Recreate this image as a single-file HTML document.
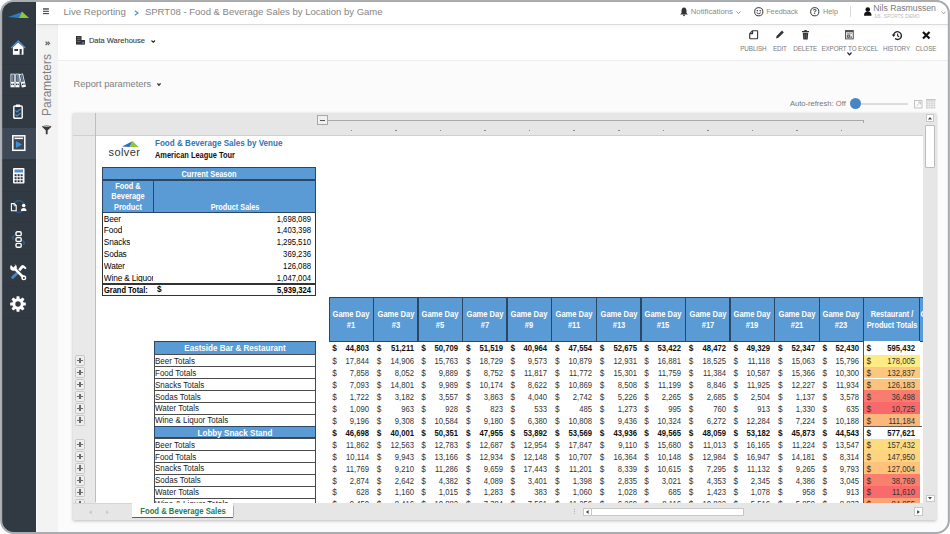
<!DOCTYPE html>
<html><head><meta charset="utf-8">
<style>
*{margin:0;padding:0;box-sizing:border-box}
html,body{width:950px;height:534px;overflow:hidden;background:#fff;font-family:"Liberation Sans", sans-serif}
.a{position:absolute}
.t{position:absolute;white-space:nowrap;line-height:1}
svg{position:absolute;overflow:visible}
</style></head><body>
<div class="a" style="left:0.00px;top:0.00px;width:35.50px;height:534.00px;background:#313942"></div>
<div class="a" style="left:0.00px;top:128.40px;width:35.50px;height:30.60px;background:#3e4957"></div>
<div class="a" style="left:2.00px;top:63.80px;width:33.50px;height:0.80px;background:#2e363f"></div>
<div class="a" style="left:2.00px;top:94.70px;width:33.50px;height:0.80px;background:#2e363f"></div>
<div class="a" style="left:2.00px;top:159.50px;width:33.50px;height:0.80px;background:#2e363f"></div>
<div class="a" style="left:2.00px;top:191.00px;width:33.50px;height:0.80px;background:#2e363f"></div>
<div class="a" style="left:2.00px;top:222.00px;width:33.50px;height:0.80px;background:#2e363f"></div>
<div class="a" style="left:2.00px;top:254.00px;width:33.50px;height:0.80px;background:#2e363f"></div>
<div class="a" style="left:2.00px;top:286.00px;width:33.50px;height:0.80px;background:#2e363f"></div>
<div class="a" style="left:2.00px;top:318.00px;width:33.50px;height:0.80px;background:#2e363f"></div>
<svg style="left:8px;top:8px" width="22" height="12" viewBox="0 0 22 12"><polygon points="0,9 14,4 11,10" fill="#2d7bc4"/><polygon points="11,10 14,3.5 21,10" fill="#8cc63f"/></svg>
<svg style="left:10px;top:40px" width="16" height="15" viewBox="0 0 16 15"><path d="M1.2 7.9 L8.2 0.9 L15.2 7.9" stroke="#4f8fd0" stroke-width="1.4" fill="none"/><path d="M2.9 7.2 L8.2 2.6 L13.5 7.2 V14.7 H2.9 Z" fill="#fff"/><rect x="4.4" y="9" width="3.6" height="2" fill="#313942"/><rect x="9.6" y="9" width="2.1" height="5.7" fill="#313942"/></svg>
<svg style="left:10px;top:72.5px" width="17" height="15" viewBox="0 0 17 15"><rect x="0.5" y="0.7" width="4.2" height="13.6" fill="#fff"/><rect x="1.3" y="1.5" width="2.6" height="7.4" fill="#3a4d63"/><rect x="2.1" y="1.5" width="0.9" height="7.4" fill="#6f8fb3"/><rect x="1.2" y="10.6" width="1.2" height="1.5" fill="#313942"/><rect x="2.8" y="10.6" width="1.2" height="1.5" fill="#313942"/><rect x="5.3" y="0.7" width="4.2" height="13.6" fill="#fff"/><rect x="6.1" y="1.5" width="2.6" height="7.4" fill="#3a4d63"/><rect x="6.9" y="1.5" width="0.9" height="7.4" fill="#6f8fb3"/><rect x="6.0" y="10.6" width="1.2" height="1.5" fill="#313942"/><rect x="7.6" y="10.6" width="1.2" height="1.5" fill="#313942"/><g transform="rotate(-13 12.5 8)"><rect x="10.4" y="0.7" width="4.2" height="13.6" fill="#fff"/><rect x="11.200000000000001" y="1.5" width="2.6" height="7.4" fill="#3a4d63"/><rect x="12.0" y="1.5" width="0.9" height="7.4" fill="#6f8fb3"/><rect x="11.1" y="10.6" width="1.2" height="1.5" fill="#313942"/><rect x="12.7" y="10.6" width="1.2" height="1.5" fill="#313942"/></g></svg>
<svg style="left:12.5px;top:103.5px" width="10" height="15" viewBox="0 0 10 15"><rect x="0.8" y="2" width="8.4" height="12.2" rx="1" fill="none" stroke="#fff" stroke-width="1.4"/><rect x="3" y="0.5" width="4" height="2.5" fill="#fff"/><path d="M2.5 6.5 L4 8 L7.5 5 M2.5 10.5 L4 12 L7.5 9" stroke="#3d8fd6" stroke-width="1.2" fill="none"/></svg>
<svg style="left:11.5px;top:135px" width="14" height="16" viewBox="0 0 14 16"><rect x="0.8" y="0.8" width="12" height="14.5" fill="none" stroke="#fff" stroke-width="1.5"/><rect x="2.5" y="2.6" width="8.6" height="1.5" fill="#fff"/><polygon points="4,6 4,13 10,9.5" fill="#3d8fd6"/></svg>
<svg style="left:12.5px;top:167.5px" width="11.5" height="15.5" viewBox="0 0 11.5 15.5"><rect x="0" y="0" width="11.5" height="15.5" rx="1" fill="#fff"/><rect x="1.5" y="1.5" width="8.5" height="3" fill="#5b8ec4"/><rect x="1.6" y="6.2" width="2" height="2" fill="#2e3641"/><rect x="4.6" y="6.2" width="2" height="2" fill="#2e3641"/><rect x="7.6" y="6.2" width="2" height="2" fill="#2e3641"/><rect x="1.6" y="9.2" width="2" height="2" fill="#2e3641"/><rect x="4.6" y="9.2" width="2" height="2" fill="#2e3641"/><rect x="7.6" y="9.2" width="2" height="2" fill="#2e3641"/><rect x="1.6" y="12.2" width="2" height="2" fill="#2e3641"/><rect x="4.6" y="12.2" width="2" height="2" fill="#2e3641"/><rect x="7.6" y="12.2" width="2" height="2" fill="#2e3641"/></svg>
<svg style="left:9.5px;top:199.5px" width="17" height="13" viewBox="0 0 17 13"><circle cx="9" cy="6.5" r="5.9" fill="none" stroke="#2f5f94" stroke-width="1.1"/><path d="M1.4 3.6 H4.3 L6.2 5.5 V10.7 H1.4 Z" fill="#313942" stroke="#fff" stroke-width="1.1"/><path d="M4 3.6 V5.8 H6.2" fill="none" stroke="#fff" stroke-width="0.7"/><rect x="7.2" y="4" width="2" height="6" fill="#313942"/><circle cx="13.7" cy="5.6" r="1.75" fill="#fff"/><path d="M10.9 11 Q10.9 7.9 13.7 7.9 Q16.5 7.9 16.5 11 Z" fill="#fff"/></svg>
<svg style="left:10.5px;top:231px" width="15" height="17" viewBox="0 0 15 17"><rect x="5" y="0.8" width="5.2" height="3.8" rx="1.2" fill="none" stroke="#fff" stroke-width="1.4"/><rect x="5" y="6.6" width="5.2" height="3.8" rx="1.2" fill="none" stroke="#fff" stroke-width="1.4"/><rect x="5" y="12.4" width="5.2" height="3.8" rx="1.2" fill="none" stroke="#fff" stroke-width="1.4"/><path d="M3.6 4.2 Q0.6 5.6 2.2 8.6" stroke="#3a78bd" stroke-width="1" fill="none"/><path d="M11.6 9.4 Q14.4 10.8 12.8 13.6" stroke="#3a78bd" stroke-width="1" fill="none"/></svg>
<svg style="left:9.5px;top:263.5px" width="17" height="16" viewBox="0 0 17 16"><path d="M2.6 13.6 L6.8 9.4" stroke="#4a86c6" stroke-width="2.8" stroke-linecap="round"/><path d="M8.2 5.2 L11.4 1.6 Q12.6 0.6 14 1.4 L16.6 4 L15.3 5.3 L13.2 3.8 L10.2 7.2 Z" fill="#fff"/><path d="M4.4 4.4 L13.4 13.4" stroke="#fff" stroke-width="2.7" stroke-linecap="round"/><circle cx="3.5" cy="3.5" r="3.3" fill="#fff"/><path d="M-0.5 -0.5 L3.4 3.4 L5.6 1.2 L2 -2.2 Z" fill="#313942"/><circle cx="13.8" cy="13.8" r="2.5" fill="#fff"/><circle cx="13.9" cy="13.9" r="1" fill="#313942"/></svg>
<svg style="left:10px;top:295.5px" width="16" height="16" viewBox="0 0 16 16"><circle cx="8" cy="8" r="5.7" fill="#fff"/><rect x="6.5" y="0.2" width="3" height="15.6" rx="0.6" fill="#fff" transform="rotate(0 8 8)"/><rect x="6.5" y="0.2" width="3" height="15.6" rx="0.6" fill="#fff" transform="rotate(45 8 8)"/><rect x="6.5" y="0.2" width="3" height="15.6" rx="0.6" fill="#fff" transform="rotate(90 8 8)"/><rect x="6.5" y="0.2" width="3" height="15.6" rx="0.6" fill="#fff" transform="rotate(135 8 8)"/><circle cx="8" cy="8" r="2.7" fill="#313942"/></svg>
<div class="a" style="left:35.50px;top:0.00px;width:914.50px;height:23.60px;background:#fff;box-shadow:0 0.6px 1px rgba(0,0,0,0.11),0 2px 5px rgba(0,0,0,0.05);z-index:2"></div>
<div class="a" style="z-index:3;left:0;top:0">
<svg style="left:43.1px;top:8px" width="6" height="7" viewBox="0 0 6 7"><rect x="0" y="0.2" width="5.9" height="1.5" fill="#555"/><rect x="0" y="2.75" width="5.9" height="1.1" fill="#444"/><rect x="0" y="5.05" width="5.9" height="1.1" fill="#444"/></svg>
<div class="t" style="left:63.40px;top:7.42px;font-size:9.7px;color:#858585;font-weight:normal;">Live Reporting</div>
<svg style="left:133.5px;top:9.5px" width="5" height="6" viewBox="0 0 5 6"><path d="M0.8 0.8 L4 3 L0.8 5.2" stroke="#4a90d0" stroke-width="1.1" fill="none"/></svg>
<div class="t" style="left:144.90px;top:6.67px;font-size:9.54px;color:#858585;font-weight:normal;">SPRT08 - Food &amp; Beverage Sales by Location by Game</div>
<svg style="left:679.5px;top:6.5px" width="8" height="9" viewBox="0 0 8 9"><path d="M4 0.5 Q6.5 0.8 6.5 4 L6.5 6 L7.8 7.5 L0.2 7.5 L1.5 6 L1.5 4 Q1.5 0.8 4 0.5Z" fill="#333"/><circle cx="4" cy="8.3" r="0.9" fill="#333"/></svg>
<div class="t" style="left:690.80px;top:7.80px;font-size:7.73px;color:#8a8a8a;font-weight:normal;">Notifications</div>
<svg style="left:736px;top:10.5px" width="5" height="3" viewBox="0 0 5 3"><path d="M0.5 0.5 L2.5 2.5 L4.5 0.5" stroke="#888" stroke-width="0.9" fill="none"/></svg>
<svg style="left:753.7px;top:6.5px" width="9.5" height="9.5" viewBox="0 0 9.5 9.5"><circle cx="4.75" cy="4.75" r="4.1" fill="none" stroke="#333" stroke-width="1"/><circle cx="3.3" cy="3.7" r="0.8" fill="#333"/><circle cx="6.2" cy="3.7" r="0.8" fill="#333"/><path d="M2.6 5.7 Q4.75 8 6.9 5.7" stroke="#333" stroke-width="0.9" fill="none"/></svg>
<div class="t" style="left:766.20px;top:8.25px;font-size:7.24px;color:#8a8a8a;font-weight:normal;">Feedback</div>
<svg style="left:810.2px;top:6.5px" width="9.5" height="9.5" viewBox="0 0 9.5 9.5"><circle cx="4.75" cy="4.75" r="4.1" fill="none" stroke="#333" stroke-width="1"/><text x="4.75" y="7.4" font-size="7" font-weight="bold" text-anchor="middle" fill="#333" font-family="Liberation Sans">?</text></svg>
<div class="t" style="left:823.00px;top:8.20px;font-size:7.29px;color:#8a8a8a;font-weight:normal;">Help</div>
<div class="a" style="left:850.00px;top:6.40px;width:1.00px;height:11.00px;background:#d8d8d8"></div>
<svg style="left:864.3px;top:7px" width="7.5" height="9" viewBox="0 0 7.5 9"><circle cx="3.75" cy="2.5" r="2.3" fill="#111"/><path d="M0 8.7 Q0 4.6 3.75 4.6 Q7.5 4.6 7.5 8.7 Z" fill="#111"/></svg>
<div class="t" style="left:873.30px;top:4.34px;font-size:8.68px;color:#7a7a7a;font-weight:normal;">Nils Rasmussen</div>
<div class="t" style="left:874.00px;top:13.96px;font-size:5.9px;color:#bbbbbb;font-weight:normal;letter-spacing:-0.05px">16. S<span style="font-size:4.7px">PORTS</span> D<span style="font-size:4.7px">EMO</span></div>
<svg style="left:940.5px;top:11px" width="5" height="3.5" viewBox="0 0 5 3.5"><path d="M0.5 0.5 L2.5 2.8 L4.5 0.5" stroke="#999" stroke-width="0.9" fill="none"/></svg>
</div>
<div class="a" style="left:35.50px;top:24.00px;width:22.70px;height:510.00px;background:#f3f3f3"></div>
<div class="a" style="left:35.50px;top:24.00px;width:1.00px;height:510.00px;background:#fbfbfb"></div>
<svg style="left:45px;top:41.2px" width="5" height="4.6" viewBox="0 0 5 4.6"><path d="M0.6 0.6 L2.3 2.3 L0.6 4 M2.8 0.6 L4.5 2.3 L2.8 4" stroke="#666" stroke-width="1.2" fill="none"/></svg>
<div class="t" style="left:6.80px;top:78.60px;width:80px;height:12px;text-align:center;font-size:11.96px;color:#808080;transform:rotate(-90deg);transform-origin:40px 6px;line-height:12px">Parameters</div>
<svg style="left:41.8px;top:124.8px" width="9.4" height="9.4" viewBox="0 0 9.4 9.4"><path d="M0 1.2 Q4.7 -0.4 9.4 1.2 Q9.4 2 8.6 2.6 L5.6 5.4 V9.3 H3.8 V5.4 L0.8 2.6 Q0 2 0 1.2 Z" fill="#3a3a3a"/><ellipse cx="4.7" cy="1.3" rx="3.6" ry="0.6" fill="#aaa"/></svg>
<div class="a" style="left:58.20px;top:60.50px;width:891.80px;height:473.50px;background:#fbfbfb"></div>
<div class="a" style="left:58.20px;top:59.50px;width:891.80px;height:1.00px;background:#ededed"></div>
<svg style="left:75.8px;top:36.1px" width="9" height="8.6" viewBox="0 0 9 8.6"><rect x="0" y="0" width="5.5" height="8.6" fill="#333"/><rect x="1" y="1.3" width="3.5" height="0.8" fill="#777"/><rect x="1" y="3.3" width="3.5" height="0.8" fill="#777"/><rect x="1" y="5.3" width="3.5" height="0.8" fill="#777"/><rect x="5" y="4" width="4" height="4.6" fill="#333"/><rect x="5.8" y="5.8" width="2.5" height="2" fill="#4a6f99"/></svg>
<div class="t" style="left:88.90px;top:37.11px;font-size:7.5px;color:#3a3a3a;font-weight:normal;-webkit-text-stroke:0.1px #3a3a3a">Data Warehouse</div>
<svg style="left:150.8px;top:39.5px" width="4.5" height="3" viewBox="0 0 4.5 3"><path d="M0.5 0.5 L2.25 2.3 L4 0.5" stroke="#222" stroke-width="1.1" fill="none"/></svg>
<div class="t" style="left:703.40px;width:100px;text-align:center;top:45.90px;font-size:6.3px;color:#7a7a7a;font-weight:normal;letter-spacing:-0.1px">PUBLISH</div>
<div class="t" style="left:729.90px;width:100px;text-align:center;top:45.90px;font-size:6.3px;color:#7a7a7a;font-weight:normal;letter-spacing:-0.1px">EDIT</div>
<div class="t" style="left:755.15px;width:100px;text-align:center;top:45.90px;font-size:6.3px;color:#7a7a7a;font-weight:normal;letter-spacing:-0.1px">DELETE</div>
<div class="t" style="left:799.85px;width:100px;text-align:center;top:45.90px;font-size:6.3px;color:#7a7a7a;font-weight:normal;letter-spacing:-0.1px">EXPORT TO EXCEL</div>
<div class="t" style="left:846.50px;width:100px;text-align:center;top:45.90px;font-size:6.3px;color:#7a7a7a;font-weight:normal;letter-spacing:-0.1px">HISTORY</div>
<div class="t" style="left:875.95px;width:100px;text-align:center;top:45.90px;font-size:6.3px;color:#7a7a7a;font-weight:normal;letter-spacing:-0.1px">CLOSE</div>
<svg style="left:748.5px;top:30px" width="9.3" height="9.5" viewBox="0 0 9.3 9.5"><path d="M3.6 0.7 H8.1 Q8.6 0.7 8.6 1.2 V8.3 Q8.6 8.8 8.1 8.8 H1.2 Q0.7 8.8 0.7 8.3 V3.6 Z M3.6 0.7 V3.6 H0.7" fill="none" stroke="#333" stroke-width="1.1" stroke-linejoin="round"/></svg>
<svg style="left:775px;top:30px" width="9.4" height="9.4" viewBox="0 0 9.4 9.4"><path d="M1 8.4 L1.6 6 L7 0.6 L8.8 2.4 L3.4 7.8 Z" fill="#333"/></svg>
<svg style="left:801.8px;top:30px" width="7" height="9.5" viewBox="0 0 7 9.5"><rect x="0" y="1" width="7" height="1.2" fill="#333"/><rect x="2.3" y="0" width="2.4" height="1.2" fill="#333"/><path d="M0.8 2.8 H6.2 L5.7 9.5 H1.3 Z" fill="#333"/><path d="M2.6 3.8 V8.5 M4.4 3.8 V8.5" stroke="#888" stroke-width="0.5"/></svg>
<svg style="left:845.4px;top:30px" width="8.8" height="9.4" viewBox="0 0 8.8 9.4"><rect x="0.5" y="0.5" width="7.8" height="8.4" fill="#f4f4f4" stroke="#555" stroke-width="1"/><rect x="0.5" y="0.5" width="7.8" height="1.8" fill="#555"/><rect x="1.8" y="3.4" width="5.2" height="0.7" fill="#777"/><rect x="1.8" y="4.6" width="3.4" height="3.2" fill="#444"/><path d="M2.4 5.1 L4.6 7.3 M4.6 5.1 L2.4 7.3" stroke="#eee" stroke-width="0.6"/><rect x="5.6" y="6.4" width="1.4" height="1.4" fill="#666"/></svg>
<svg style="left:847px;top:52.3px" width="5" height="4" viewBox="0 0 5 4"><path d="M0.5 0.5 L2.5 2.8 L4.5 0.5" stroke="#222" stroke-width="1.2" fill="none"/></svg>
<svg style="left:891.6px;top:30.6px" width="10" height="9" viewBox="0 0 10 9"><path d="M1.6 4.6 A3.9 3.9 0 1 1 3 7.6" stroke="#222" stroke-width="1.35" fill="none"/><path d="M-0.2 3.6 L3.4 3.6 L1.6 6 Z" fill="#222"/><path d="M5.6 2.4 V4.8 L7.2 5.8" stroke="#222" stroke-width="1.05" fill="none"/></svg>
<svg style="left:921.8px;top:30.5px" width="8.5" height="8.5" viewBox="0 0 8.5 8.5"><path d="M1 1 L7.5 7.5 M7.5 1 L1 7.5" stroke="#111" stroke-width="2.2"/></svg>
<div class="t" style="left:73.60px;top:79.87px;font-size:9.32px;color:#808080;font-weight:normal;">Report parameters</div>
<svg style="left:156.8px;top:82.6px" width="4" height="2.8" viewBox="0 0 4 2.8"><path d="M0.4 0.4 L2 2.2 L3.6 0.4" stroke="#333" stroke-width="1.3" fill="none"/></svg>
<div class="t" style="left:789.90px;top:99.94px;font-size:7.58px;color:#777;font-weight:normal;">Auto-refresh: Off</div>
<div class="a" style="left:855.00px;top:102.60px;width:53.30px;height:2.00px;background:#dcdcdc;border-radius:1px"></div>
<div class="a" style="left:849.50px;top:97.90px;width:11.50px;height:11.50px;background:#4586c6;border-radius:50%"></div>
<svg style="left:913.6px;top:99.5px" width="8.5" height="8.5" viewBox="0 0 8.5 8.5"><rect x="0.5" y="0.5" width="7.5" height="7.5" fill="none" stroke="#bdbdbd" stroke-width="0.9"/><path d="M2.5 6 L6.5 2 M4 2 H6.5 V4.5" stroke="#bdbdbd" stroke-width="0.8" fill="none"/></svg>
<svg style="left:926.3px;top:98.8px" width="9.6" height="9.8" viewBox="0 0 9.6 9.8"><rect x="0" y="0" width="9.6" height="1.6" fill="#c4c4c4"/><rect x="0.0" y="2.2" width="1.9" height="1.45" fill="#cdcdcd"/><rect x="2.45" y="2.2" width="1.9" height="1.45" fill="#cdcdcd"/><rect x="4.9" y="2.2" width="1.9" height="1.45" fill="#cdcdcd"/><rect x="7.3500000000000005" y="2.2" width="1.9" height="1.45" fill="#cdcdcd"/><rect x="0.0" y="4.15" width="1.9" height="1.45" fill="#cdcdcd"/><rect x="2.45" y="4.15" width="1.9" height="1.45" fill="#cdcdcd"/><rect x="4.9" y="4.15" width="1.9" height="1.45" fill="#cdcdcd"/><rect x="7.3500000000000005" y="4.15" width="1.9" height="1.45" fill="#cdcdcd"/><rect x="0.0" y="6.1" width="1.9" height="1.45" fill="#cdcdcd"/><rect x="2.45" y="6.1" width="1.9" height="1.45" fill="#cdcdcd"/><rect x="4.9" y="6.1" width="1.9" height="1.45" fill="#cdcdcd"/><rect x="7.3500000000000005" y="6.1" width="1.9" height="1.45" fill="#cdcdcd"/><rect x="0.0" y="8.05" width="1.9" height="1.45" fill="#cdcdcd"/><rect x="2.45" y="8.05" width="1.9" height="1.45" fill="#cdcdcd"/><rect x="4.9" y="8.05" width="1.9" height="1.45" fill="#cdcdcd"/><rect x="7.3500000000000005" y="8.05" width="1.9" height="1.45" fill="#cdcdcd"/></svg>
<div class="a" style="left:73.30px;top:113.00px;width:863.00px;height:407.20px;background:#e9e9e9;box-shadow:0 1px 3px rgba(0,0,0,0.25)"></div>
<div class="a" style="left:73.30px;top:113.00px;width:849.70px;height:22.00px;background:#e6e6e6"></div>
<div class="a" style="left:73.30px;top:134.70px;width:849.70px;height:1.00px;background:#cfcfcf"></div>
<div class="a" style="left:95.00px;top:113.00px;width:1.00px;height:389.00px;background:#bdbdbd"></div>
<div class="a" style="left:96.00px;top:135.70px;width:827.00px;height:367.20px;background:#fff"></div>
<div class="a" style="left:317.30px;top:114.90px;width:10.50px;height:10.50px;border:1px solid #a8a8a8;background:#f0f0f0"></div>
<div class="a" style="left:319.80px;top:119.60px;width:5.20px;height:1.30px;background:#555"></div>
<div class="a" style="left:327.80px;top:119.70px;width:535.70px;height:1.10px;background:#a9a9a9"></div>
<div class="a" style="left:862.50px;top:119.70px;width:1.10px;height:3.80px;background:#a9a9a9"></div>
<div class="a" style="left:350.59px;top:130.40px;width:1.50px;height:1.10px;background:#8a8a8a"></div>
<div class="a" style="left:395.17px;top:130.40px;width:1.50px;height:1.10px;background:#8a8a8a"></div>
<div class="a" style="left:439.75px;top:130.40px;width:1.50px;height:1.10px;background:#8a8a8a"></div>
<div class="a" style="left:484.33px;top:130.40px;width:1.50px;height:1.10px;background:#8a8a8a"></div>
<div class="a" style="left:528.91px;top:130.40px;width:1.50px;height:1.10px;background:#8a8a8a"></div>
<div class="a" style="left:573.49px;top:130.40px;width:1.50px;height:1.10px;background:#8a8a8a"></div>
<div class="a" style="left:618.07px;top:130.40px;width:1.50px;height:1.10px;background:#8a8a8a"></div>
<div class="a" style="left:662.65px;top:130.40px;width:1.50px;height:1.10px;background:#8a8a8a"></div>
<div class="a" style="left:707.23px;top:130.40px;width:1.50px;height:1.10px;background:#8a8a8a"></div>
<div class="a" style="left:751.81px;top:130.40px;width:1.50px;height:1.10px;background:#8a8a8a"></div>
<div class="a" style="left:796.39px;top:130.40px;width:1.50px;height:1.10px;background:#8a8a8a"></div>
<div class="a" style="left:840.97px;top:130.40px;width:1.50px;height:1.10px;background:#8a8a8a"></div>
<div class="a" style="left:923.00px;top:113.00px;width:13.30px;height:389.60px;background:#e6e6e6"></div>
<div class="a" style="left:925.70px;top:114.30px;width:8.30px;height:8.20px;background:#fff;border:1px solid #c8c8c8"></div>
<svg style="left:927.8px;top:116.6px" width="4" height="3" viewBox="0 0 4 3"><path d="M0 2.5 L2 0 L4 2.5 Z" fill="#444"/></svg>
<div class="a" style="left:924.80px;top:124.60px;width:9.80px;height:43.60px;background:#fff;border:1px solid #bcbcbc;border-radius:1px"></div>
<div class="a" style="left:925.50px;top:494.60px;width:9.00px;height:7.80px;background:#fff;border:1px solid #c8c8c8"></div>
<svg style="left:928px;top:497.3px" width="4" height="3" viewBox="0 0 4 3"><path d="M0 0 L2 2.5 L4 0 Z" fill="#444"/></svg>
<div class="a" style="left:73.30px;top:502.90px;width:863.00px;height:17.30px;background:#e6e6e6"></div>
<div class="a" style="left:73.30px;top:502.90px;width:59.10px;height:1.00px;background:#d6d6d6"></div>
<svg style="left:89px;top:509.5px" width="3" height="4.5" viewBox="0 0 3 4.5"><path d="M2.6 0 L0.2 2.25 L2.6 4.5 Z" fill="#c4c4c4"/></svg>
<svg style="left:105.5px;top:509.5px" width="3" height="4.5" viewBox="0 0 3 4.5"><path d="M0.2 0 L2.6 2.25 L0.2 4.5 Z" fill="#c4c4c4"/></svg>
<div class="a" style="left:132.40px;top:502.90px;width:100.20px;height:15.10px;background:#fff;box-shadow:0.6px 0 0.8px rgba(0,0,0,0.25)"></div>
<div class="a" style="left:132.40px;top:516.50px;width:100.20px;height:1.30px;background:#2a7a4c"></div>
<div class="t" style="left:82.60px;width:200px;text-align:center;top:506.89px;font-size:8.3px;color:#2a7a4c;font-weight:bold;transform:scaleX(0.927)">Food &amp; Beverage Sales</div>
<div class="a" style="left:574.00px;top:508.50px;width:1.00px;height:6.50px;background:repeating-linear-gradient(#b0b0b0 0 1px,transparent 1px 2.2px)"></div>
<div class="a" style="left:583.20px;top:507.50px;width:8.40px;height:8.40px;background:#fff;border:1px solid #c8c8c8"></div>
<svg style="left:586px;top:509.7px" width="3" height="4" viewBox="0 0 3 4"><path d="M2.6 0 L0 2 L2.6 4 Z" fill="#444"/></svg>
<div class="a" style="left:590.60px;top:507.50px;width:153.00px;height:8.40px;background:#fff;border:1px solid #c8c8c8"></div>
<div class="a" style="left:914.00px;top:507.40px;width:8.50px;height:8.20px;background:#fff;border:1px solid #c8c8c8"></div>
<svg style="left:917px;top:509.5px" width="3" height="4" viewBox="0 0 3 4"><path d="M0.2 0 L2.8 2 L0.2 4 Z" fill="#444"/></svg>
<div class="a" style="left:72.5px;top:135.7px;width:850.5px;height:367.2px;overflow:hidden"><div class="a" style="left:-72.5px;top:-135.7px;width:950px;height:534px">
<div class="a" style="left:74.70px;top:355.38px;width:10.70px;height:10.40px;background:#eeeeee;border:1px solid #c6c6c6;border-radius:1.6px"></div>
<div class="a" style="left:77.10px;top:359.88px;width:5.80px;height:1.40px;background:#6a6a6a"></div>
<div class="a" style="left:79.30px;top:357.68px;width:1.40px;height:5.80px;background:#6a6a6a"></div>
<div class="a" style="left:74.70px;top:367.33px;width:10.70px;height:10.40px;background:#eeeeee;border:1px solid #c6c6c6;border-radius:1.6px"></div>
<div class="a" style="left:77.10px;top:371.83px;width:5.80px;height:1.40px;background:#6a6a6a"></div>
<div class="a" style="left:79.30px;top:369.63px;width:1.40px;height:5.80px;background:#6a6a6a"></div>
<div class="a" style="left:74.70px;top:379.28px;width:10.70px;height:10.40px;background:#eeeeee;border:1px solid #c6c6c6;border-radius:1.6px"></div>
<div class="a" style="left:77.10px;top:383.78px;width:5.80px;height:1.40px;background:#6a6a6a"></div>
<div class="a" style="left:79.30px;top:381.58px;width:1.40px;height:5.80px;background:#6a6a6a"></div>
<div class="a" style="left:74.70px;top:391.23px;width:10.70px;height:10.40px;background:#eeeeee;border:1px solid #c6c6c6;border-radius:1.6px"></div>
<div class="a" style="left:77.10px;top:395.73px;width:5.80px;height:1.40px;background:#6a6a6a"></div>
<div class="a" style="left:79.30px;top:393.53px;width:1.40px;height:5.80px;background:#6a6a6a"></div>
<div class="a" style="left:74.70px;top:403.18px;width:10.70px;height:10.40px;background:#eeeeee;border:1px solid #c6c6c6;border-radius:1.6px"></div>
<div class="a" style="left:77.10px;top:407.68px;width:5.80px;height:1.40px;background:#6a6a6a"></div>
<div class="a" style="left:79.30px;top:405.48px;width:1.40px;height:5.80px;background:#6a6a6a"></div>
<div class="a" style="left:74.70px;top:415.13px;width:10.70px;height:10.40px;background:#eeeeee;border:1px solid #c6c6c6;border-radius:1.6px"></div>
<div class="a" style="left:77.10px;top:419.63px;width:5.80px;height:1.40px;background:#6a6a6a"></div>
<div class="a" style="left:79.30px;top:417.43px;width:1.40px;height:5.80px;background:#6a6a6a"></div>
<div class="a" style="left:74.70px;top:439.28px;width:10.70px;height:10.40px;background:#eeeeee;border:1px solid #c6c6c6;border-radius:1.6px"></div>
<div class="a" style="left:77.10px;top:443.78px;width:5.80px;height:1.40px;background:#6a6a6a"></div>
<div class="a" style="left:79.30px;top:441.58px;width:1.40px;height:5.80px;background:#6a6a6a"></div>
<div class="a" style="left:74.70px;top:451.23px;width:10.70px;height:10.40px;background:#eeeeee;border:1px solid #c6c6c6;border-radius:1.6px"></div>
<div class="a" style="left:77.10px;top:455.73px;width:5.80px;height:1.40px;background:#6a6a6a"></div>
<div class="a" style="left:79.30px;top:453.53px;width:1.40px;height:5.80px;background:#6a6a6a"></div>
<div class="a" style="left:74.70px;top:463.18px;width:10.70px;height:10.40px;background:#eeeeee;border:1px solid #c6c6c6;border-radius:1.6px"></div>
<div class="a" style="left:77.10px;top:467.68px;width:5.80px;height:1.40px;background:#6a6a6a"></div>
<div class="a" style="left:79.30px;top:465.48px;width:1.40px;height:5.80px;background:#6a6a6a"></div>
<div class="a" style="left:74.70px;top:475.13px;width:10.70px;height:10.40px;background:#eeeeee;border:1px solid #c6c6c6;border-radius:1.6px"></div>
<div class="a" style="left:77.10px;top:479.63px;width:5.80px;height:1.40px;background:#6a6a6a"></div>
<div class="a" style="left:79.30px;top:477.43px;width:1.40px;height:5.80px;background:#6a6a6a"></div>
<div class="a" style="left:74.70px;top:487.08px;width:10.70px;height:10.40px;background:#eeeeee;border:1px solid #c6c6c6;border-radius:1.6px"></div>
<div class="a" style="left:77.10px;top:491.58px;width:5.80px;height:1.40px;background:#6a6a6a"></div>
<div class="a" style="left:79.30px;top:489.38px;width:1.40px;height:5.80px;background:#6a6a6a"></div>
<div class="a" style="left:74.70px;top:499.03px;width:10.70px;height:10.40px;background:#eeeeee;border:1px solid #c6c6c6;border-radius:1.6px"></div>
<div class="a" style="left:77.10px;top:503.53px;width:5.80px;height:1.40px;background:#6a6a6a"></div>
<div class="a" style="left:79.30px;top:501.33px;width:1.40px;height:5.80px;background:#6a6a6a"></div>
<svg style="left:122px;top:140.8px" width="17" height="6.2" viewBox="0 0 17 6.2"><polygon points="0,5.6 10.5,0.2 7.6,6" fill="#2d6fb7"/><polygon points="7.6,6 10.5,0.1 16.6,6" fill="#8cc63f"/></svg>
<div class="t" style="left:108.60px;top:147.24px;font-size:11px;color:#333;font-weight:normal;letter-spacing:0.4px">solver</div>
<div class="t" style="left:155.00px;top:139.24px;font-size:8.8px;color:#2e75b6;font-weight:bold;transform:scaleX(0.918);transform-origin:0 50%">Food &amp; Beverage Sales by Venue</div>
<div class="t" style="left:155.00px;top:151.09px;font-size:8.3px;color:#111;font-weight:bold;transform:scaleX(0.896);transform-origin:0 50%">American League Tour</div>
<div class="a" style="left:102.30px;top:167.00px;width:213.50px;height:129.00px;background:#fff;border:1px solid #333"></div>
<div class="a" style="left:102.30px;top:167.00px;width:213.50px;height:45.60px;background:#5b9bd5;border:1.4px solid #2a4766"></div>
<div class="a" style="left:102.30px;top:179.20px;width:213.50px;height:1.40px;background:#2a4766"></div>
<div class="a" style="left:152.60px;top:179.80px;width:1.40px;height:32.80px;background:#2a4766"></div>
<div class="t" style="left:109.00px;width:200px;text-align:center;top:170.09px;font-size:8.3px;color:#fff;font-weight:bold;transform:scaleX(0.89)">Current Season</div>
<div class="t" style="left:98.00px;width:60px;text-align:center;top:182.09px;font-size:8.3px;color:#fff;font-weight:bold;transform:scaleX(0.89)">Food &amp;</div>
<div class="t" style="left:98.00px;width:60px;text-align:center;top:192.49px;font-size:8.3px;color:#fff;font-weight:bold;transform:scaleX(0.89)">Beverage</div>
<div class="t" style="left:98.00px;width:60px;text-align:center;top:203.09px;font-size:8.3px;color:#fff;font-weight:bold;transform:scaleX(0.89)">Product</div>
<div class="t" style="left:159.50px;width:150px;text-align:center;top:203.09px;font-size:8.3px;color:#fff;font-weight:bold;transform:scaleX(0.88)">Product Sales</div>
<div class="t" style="left:103.80px;top:214.61px;font-size:8.3px;color:#000;font-weight:normal;max-width:49px;overflow:hidden;letter-spacing:-0.14px">Beer</div>
<div class="t" style="left:211.30px;width:100px;text-align:right;top:214.61px;font-size:8.3px;color:#000;font-weight:normal;transform:scaleX(0.93);transform-origin:100% 50%">1,698,089</div>
<div class="t" style="left:103.80px;top:226.46px;font-size:8.3px;color:#000;font-weight:normal;max-width:49px;overflow:hidden;letter-spacing:-0.14px">Food</div>
<div class="t" style="left:211.30px;width:100px;text-align:right;top:226.46px;font-size:8.3px;color:#000;font-weight:normal;transform:scaleX(0.93);transform-origin:100% 50%">1,403,398</div>
<div class="t" style="left:103.80px;top:238.31px;font-size:8.3px;color:#000;font-weight:normal;max-width:49px;overflow:hidden;letter-spacing:-0.14px">Snacks</div>
<div class="t" style="left:211.30px;width:100px;text-align:right;top:238.31px;font-size:8.3px;color:#000;font-weight:normal;transform:scaleX(0.93);transform-origin:100% 50%">1,295,510</div>
<div class="t" style="left:103.80px;top:250.16px;font-size:8.3px;color:#000;font-weight:normal;max-width:49px;overflow:hidden;letter-spacing:-0.14px">Sodas</div>
<div class="t" style="left:211.30px;width:100px;text-align:right;top:250.16px;font-size:8.3px;color:#000;font-weight:normal;transform:scaleX(0.93);transform-origin:100% 50%">369,236</div>
<div class="t" style="left:103.80px;top:262.01px;font-size:8.3px;color:#000;font-weight:normal;max-width:49px;overflow:hidden;letter-spacing:-0.14px">Water</div>
<div class="t" style="left:211.30px;width:100px;text-align:right;top:262.01px;font-size:8.3px;color:#000;font-weight:normal;transform:scaleX(0.93);transform-origin:100% 50%">126,088</div>
<div class="t" style="left:103.80px;top:273.86px;font-size:8.3px;color:#000;font-weight:normal;max-width:49px;overflow:hidden;letter-spacing:-0.14px">Wine &amp; Liquor</div>
<div class="t" style="left:211.30px;width:100px;text-align:right;top:273.86px;font-size:8.3px;color:#000;font-weight:normal;transform:scaleX(0.93);transform-origin:100% 50%">1,047,004</div>
<div class="a" style="left:102.30px;top:283.00px;width:213.50px;height:1.60px;background:#333"></div>
<div class="t" style="left:103.80px;top:286.39px;font-size:8.3px;color:#000;font-weight:bold;transform:scaleX(0.9);transform-origin:0 50%">Grand Total:</div>
<div class="t" style="left:157.00px;top:286.48px;font-size:8.2px;color:#000;font-weight:bold;">$</div>
<div class="t" style="left:211.30px;width:100px;text-align:right;top:286.39px;font-size:8.3px;color:#000;font-weight:bold;transform:scaleX(0.92);transform-origin:100% 50%">5,939,324</div>
<div class="a" style="left:153.50px;top:341.20px;width:162.00px;height:13.40px;background:#5b9bd5;border:1.4px solid #2a4766"></div>
<div class="t" style="left:134.50px;width:200px;text-align:center;top:344.42px;font-size:8.6px;color:#fff;font-weight:bold;transform:scaleX(0.94)">Eastside Bar &amp; Restaurant</div>
<div class="a" style="left:153.50px;top:354.00px;width:162.00px;height:13.15px;border:1.25px solid #4a4a4a;border-left-width:1.4px;border-right-width:1.3px;background:#fff"></div>
<div class="t" style="left:155.40px;top:356.66px;font-size:8.3px;color:#222;font-weight:normal;transform:scaleX(0.965);transform-origin:0 50%">Beer Totals</div>
<div class="a" style="left:153.50px;top:365.95px;width:162.00px;height:13.15px;border:1.25px solid #4a4a4a;border-left-width:1.4px;border-right-width:1.3px;background:#fff"></div>
<div class="t" style="left:155.40px;top:368.61px;font-size:8.3px;color:#222;font-weight:normal;transform:scaleX(0.965);transform-origin:0 50%">Food Totals</div>
<div class="a" style="left:153.50px;top:377.90px;width:162.00px;height:13.15px;border:1.25px solid #4a4a4a;border-left-width:1.4px;border-right-width:1.3px;background:#fff"></div>
<div class="t" style="left:155.40px;top:380.56px;font-size:8.3px;color:#222;font-weight:normal;transform:scaleX(0.965);transform-origin:0 50%">Snacks Totals</div>
<div class="a" style="left:153.50px;top:389.85px;width:162.00px;height:13.15px;border:1.25px solid #4a4a4a;border-left-width:1.4px;border-right-width:1.3px;background:#fff"></div>
<div class="t" style="left:155.40px;top:392.51px;font-size:8.3px;color:#222;font-weight:normal;transform:scaleX(0.965);transform-origin:0 50%">Sodas Totals</div>
<div class="a" style="left:153.50px;top:401.80px;width:162.00px;height:13.15px;border:1.25px solid #4a4a4a;border-left-width:1.4px;border-right-width:1.3px;background:#fff"></div>
<div class="t" style="left:155.40px;top:404.46px;font-size:8.3px;color:#222;font-weight:normal;transform:scaleX(0.965);transform-origin:0 50%">Water Totals</div>
<div class="a" style="left:153.50px;top:413.75px;width:162.00px;height:13.15px;border:1.25px solid #4a4a4a;border-left-width:1.4px;border-right-width:1.3px;background:#fff"></div>
<div class="t" style="left:155.40px;top:416.41px;font-size:8.3px;color:#222;font-weight:normal;transform:scaleX(0.965);transform-origin:0 50%">Wine &amp; Liquor Totals</div>
<div class="a" style="left:153.50px;top:426.30px;width:162.00px;height:12.20px;background:#5b9bd5;border:1.4px solid #2a4766"></div>
<div class="t" style="left:134.50px;width:200px;text-align:center;top:428.92px;font-size:8.6px;color:#fff;font-weight:bold;transform:scaleX(0.94)">Lobby Snack Stand</div>
<div class="a" style="left:153.50px;top:437.90px;width:162.00px;height:13.15px;border:1.25px solid #4a4a4a;border-left-width:1.4px;border-right-width:1.3px;background:#fff"></div>
<div class="t" style="left:155.40px;top:440.56px;font-size:8.3px;color:#222;font-weight:normal;transform:scaleX(0.965);transform-origin:0 50%">Beer Totals</div>
<div class="a" style="left:153.50px;top:449.85px;width:162.00px;height:13.15px;border:1.25px solid #4a4a4a;border-left-width:1.4px;border-right-width:1.3px;background:#fff"></div>
<div class="t" style="left:155.40px;top:452.51px;font-size:8.3px;color:#222;font-weight:normal;transform:scaleX(0.965);transform-origin:0 50%">Food Totals</div>
<div class="a" style="left:153.50px;top:461.80px;width:162.00px;height:13.15px;border:1.25px solid #4a4a4a;border-left-width:1.4px;border-right-width:1.3px;background:#fff"></div>
<div class="t" style="left:155.40px;top:464.46px;font-size:8.3px;color:#222;font-weight:normal;transform:scaleX(0.965);transform-origin:0 50%">Snacks Totals</div>
<div class="a" style="left:153.50px;top:473.75px;width:162.00px;height:13.15px;border:1.25px solid #4a4a4a;border-left-width:1.4px;border-right-width:1.3px;background:#fff"></div>
<div class="t" style="left:155.40px;top:476.41px;font-size:8.3px;color:#222;font-weight:normal;transform:scaleX(0.965);transform-origin:0 50%">Sodas Totals</div>
<div class="a" style="left:153.50px;top:485.70px;width:162.00px;height:13.15px;border:1.25px solid #4a4a4a;border-left-width:1.4px;border-right-width:1.3px;background:#fff"></div>
<div class="t" style="left:155.40px;top:488.36px;font-size:8.3px;color:#222;font-weight:normal;transform:scaleX(0.965);transform-origin:0 50%">Water Totals</div>
<div class="a" style="left:153.50px;top:497.65px;width:162.00px;height:13.15px;border:1.25px solid #4a4a4a;border-left-width:1.4px;border-right-width:1.3px;background:#fff"></div>
<div class="t" style="left:155.40px;top:500.31px;font-size:8.3px;color:#222;font-weight:normal;transform:scaleX(0.965);transform-origin:0 50%">Wine &amp; Liquor Totals</div>
<div class="a" style="left:328.80px;top:297.40px;width:594.20px;height:44.60px;background:#5b9bd5;border-top:1.2px solid #2a4766;border-bottom:1.2px solid #2a4766;border-left:1.2px solid #2a4766"></div>
<div class="a" style="left:372.73px;top:297.60px;width:1.30px;height:43.70px;background:#2a4766"></div>
<div class="a" style="left:417.31px;top:297.60px;width:1.30px;height:43.70px;background:#2a4766"></div>
<div class="a" style="left:461.89px;top:297.60px;width:1.30px;height:43.70px;background:#2a4766"></div>
<div class="a" style="left:506.47px;top:297.60px;width:1.30px;height:43.70px;background:#2a4766"></div>
<div class="a" style="left:551.05px;top:297.60px;width:1.30px;height:43.70px;background:#2a4766"></div>
<div class="a" style="left:595.63px;top:297.60px;width:1.30px;height:43.70px;background:#2a4766"></div>
<div class="a" style="left:640.21px;top:297.60px;width:1.30px;height:43.70px;background:#2a4766"></div>
<div class="a" style="left:684.79px;top:297.60px;width:1.30px;height:43.70px;background:#2a4766"></div>
<div class="a" style="left:729.37px;top:297.60px;width:1.30px;height:43.70px;background:#2a4766"></div>
<div class="a" style="left:773.95px;top:297.60px;width:1.30px;height:43.70px;background:#2a4766"></div>
<div class="a" style="left:818.53px;top:297.60px;width:1.30px;height:43.70px;background:#2a4766"></div>
<div class="a" style="left:863.11px;top:297.60px;width:1.30px;height:43.70px;background:#2a4766"></div>
<div class="a" style="left:918.65px;top:297.60px;width:1.30px;height:43.70px;background:#2a4766"></div>
<div class="t" style="left:321.09px;width:60px;text-align:center;top:310.09px;font-size:8.3px;color:#fff;font-weight:bold;transform:scaleX(0.91)">Game Day</div>
<div class="t" style="left:321.09px;width:60px;text-align:center;top:321.09px;font-size:8.3px;color:#fff;font-weight:bold;transform:scaleX(0.91)">#1</div>
<div class="t" style="left:365.67px;width:60px;text-align:center;top:310.09px;font-size:8.3px;color:#fff;font-weight:bold;transform:scaleX(0.91)">Game Day</div>
<div class="t" style="left:365.67px;width:60px;text-align:center;top:321.09px;font-size:8.3px;color:#fff;font-weight:bold;transform:scaleX(0.91)">#3</div>
<div class="t" style="left:410.25px;width:60px;text-align:center;top:310.09px;font-size:8.3px;color:#fff;font-weight:bold;transform:scaleX(0.91)">Game Day</div>
<div class="t" style="left:410.25px;width:60px;text-align:center;top:321.09px;font-size:8.3px;color:#fff;font-weight:bold;transform:scaleX(0.91)">#5</div>
<div class="t" style="left:454.83px;width:60px;text-align:center;top:310.09px;font-size:8.3px;color:#fff;font-weight:bold;transform:scaleX(0.91)">Game Day</div>
<div class="t" style="left:454.83px;width:60px;text-align:center;top:321.09px;font-size:8.3px;color:#fff;font-weight:bold;transform:scaleX(0.91)">#7</div>
<div class="t" style="left:499.41px;width:60px;text-align:center;top:310.09px;font-size:8.3px;color:#fff;font-weight:bold;transform:scaleX(0.91)">Game Day</div>
<div class="t" style="left:499.41px;width:60px;text-align:center;top:321.09px;font-size:8.3px;color:#fff;font-weight:bold;transform:scaleX(0.91)">#9</div>
<div class="t" style="left:543.99px;width:60px;text-align:center;top:310.09px;font-size:8.3px;color:#fff;font-weight:bold;transform:scaleX(0.91)">Game Day</div>
<div class="t" style="left:543.99px;width:60px;text-align:center;top:321.09px;font-size:8.3px;color:#fff;font-weight:bold;transform:scaleX(0.91)">#11</div>
<div class="t" style="left:588.57px;width:60px;text-align:center;top:310.09px;font-size:8.3px;color:#fff;font-weight:bold;transform:scaleX(0.91)">Game Day</div>
<div class="t" style="left:588.57px;width:60px;text-align:center;top:321.09px;font-size:8.3px;color:#fff;font-weight:bold;transform:scaleX(0.91)">#13</div>
<div class="t" style="left:633.15px;width:60px;text-align:center;top:310.09px;font-size:8.3px;color:#fff;font-weight:bold;transform:scaleX(0.91)">Game Day</div>
<div class="t" style="left:633.15px;width:60px;text-align:center;top:321.09px;font-size:8.3px;color:#fff;font-weight:bold;transform:scaleX(0.91)">#15</div>
<div class="t" style="left:677.73px;width:60px;text-align:center;top:310.09px;font-size:8.3px;color:#fff;font-weight:bold;transform:scaleX(0.91)">Game Day</div>
<div class="t" style="left:677.73px;width:60px;text-align:center;top:321.09px;font-size:8.3px;color:#fff;font-weight:bold;transform:scaleX(0.91)">#17</div>
<div class="t" style="left:722.31px;width:60px;text-align:center;top:310.09px;font-size:8.3px;color:#fff;font-weight:bold;transform:scaleX(0.91)">Game Day</div>
<div class="t" style="left:722.31px;width:60px;text-align:center;top:321.09px;font-size:8.3px;color:#fff;font-weight:bold;transform:scaleX(0.91)">#19</div>
<div class="t" style="left:766.89px;width:60px;text-align:center;top:310.09px;font-size:8.3px;color:#fff;font-weight:bold;transform:scaleX(0.91)">Game Day</div>
<div class="t" style="left:766.89px;width:60px;text-align:center;top:321.09px;font-size:8.3px;color:#fff;font-weight:bold;transform:scaleX(0.91)">#21</div>
<div class="t" style="left:811.47px;width:60px;text-align:center;top:310.09px;font-size:8.3px;color:#fff;font-weight:bold;transform:scaleX(0.91)">Game Day</div>
<div class="t" style="left:811.47px;width:60px;text-align:center;top:321.09px;font-size:8.3px;color:#fff;font-weight:bold;transform:scaleX(0.91)">#23</div>
<div class="t" style="left:851.50px;width:80px;text-align:center;top:310.09px;font-size:8.3px;color:#fff;font-weight:bold;transform:scaleX(0.89)">Restaurant /</div>
<div class="t" style="left:851.50px;width:80px;text-align:center;top:321.09px;font-size:8.3px;color:#fff;font-weight:bold;transform:scaleX(0.88)">Product Totals</div>
<div class="t" style="left:920.60px;top:310.09px;font-size:8.3px;color:#fff;font-weight:bold;">G</div>
<div class="t" style="left:332.20px;top:344.14px;font-size:8.3px;color:#111;font-weight:bold;">$</div>
<div class="t" style="left:309.08px;width:60px;text-align:right;top:344.14px;font-size:8.3px;color:#111;font-weight:bold;transform:scaleX(0.925);transform-origin:100% 50%">44,803</div>
<div class="t" style="left:376.78px;top:344.14px;font-size:8.3px;color:#111;font-weight:bold;">$</div>
<div class="t" style="left:353.66px;width:60px;text-align:right;top:344.14px;font-size:8.3px;color:#111;font-weight:bold;transform:scaleX(0.925);transform-origin:100% 50%">51,211</div>
<div class="t" style="left:421.36px;top:344.14px;font-size:8.3px;color:#111;font-weight:bold;">$</div>
<div class="t" style="left:398.24px;width:60px;text-align:right;top:344.14px;font-size:8.3px;color:#111;font-weight:bold;transform:scaleX(0.925);transform-origin:100% 50%">50,709</div>
<div class="t" style="left:465.94px;top:344.14px;font-size:8.3px;color:#111;font-weight:bold;">$</div>
<div class="t" style="left:442.82px;width:60px;text-align:right;top:344.14px;font-size:8.3px;color:#111;font-weight:bold;transform:scaleX(0.925);transform-origin:100% 50%">51,519</div>
<div class="t" style="left:510.52px;top:344.14px;font-size:8.3px;color:#111;font-weight:bold;">$</div>
<div class="t" style="left:487.40px;width:60px;text-align:right;top:344.14px;font-size:8.3px;color:#111;font-weight:bold;transform:scaleX(0.925);transform-origin:100% 50%">40,964</div>
<div class="t" style="left:555.10px;top:344.14px;font-size:8.3px;color:#111;font-weight:bold;">$</div>
<div class="t" style="left:531.98px;width:60px;text-align:right;top:344.14px;font-size:8.3px;color:#111;font-weight:bold;transform:scaleX(0.925);transform-origin:100% 50%">47,554</div>
<div class="t" style="left:599.68px;top:344.14px;font-size:8.3px;color:#111;font-weight:bold;">$</div>
<div class="t" style="left:576.56px;width:60px;text-align:right;top:344.14px;font-size:8.3px;color:#111;font-weight:bold;transform:scaleX(0.925);transform-origin:100% 50%">52,675</div>
<div class="t" style="left:644.26px;top:344.14px;font-size:8.3px;color:#111;font-weight:bold;">$</div>
<div class="t" style="left:621.14px;width:60px;text-align:right;top:344.14px;font-size:8.3px;color:#111;font-weight:bold;transform:scaleX(0.925);transform-origin:100% 50%">53,422</div>
<div class="t" style="left:688.84px;top:344.14px;font-size:8.3px;color:#111;font-weight:bold;">$</div>
<div class="t" style="left:665.72px;width:60px;text-align:right;top:344.14px;font-size:8.3px;color:#111;font-weight:bold;transform:scaleX(0.925);transform-origin:100% 50%">48,472</div>
<div class="t" style="left:733.42px;top:344.14px;font-size:8.3px;color:#111;font-weight:bold;">$</div>
<div class="t" style="left:710.30px;width:60px;text-align:right;top:344.14px;font-size:8.3px;color:#111;font-weight:bold;transform:scaleX(0.925);transform-origin:100% 50%">49,329</div>
<div class="t" style="left:778.00px;top:344.14px;font-size:8.3px;color:#111;font-weight:bold;">$</div>
<div class="t" style="left:754.88px;width:60px;text-align:right;top:344.14px;font-size:8.3px;color:#111;font-weight:bold;transform:scaleX(0.925);transform-origin:100% 50%">52,347</div>
<div class="t" style="left:822.58px;top:344.14px;font-size:8.3px;color:#111;font-weight:bold;">$</div>
<div class="t" style="left:799.46px;width:60px;text-align:right;top:344.14px;font-size:8.3px;color:#111;font-weight:bold;transform:scaleX(0.925);transform-origin:100% 50%">52,430</div>
<div class="a" style="left:863.70px;top:341.30px;width:56.20px;height:13.30px;background:#fff"></div>
<div class="t" style="left:866.50px;top:344.14px;font-size:8.3px;color:#111;font-weight:bold;">$</div>
<div class="t" style="left:855.40px;width:60px;text-align:right;top:344.14px;font-size:8.3px;color:#111;font-weight:bold;transform:scaleX(0.925);transform-origin:100% 50%">595,432</div>
<div class="t" style="left:332.20px;top:356.76px;font-size:8.3px;color:#333;font-weight:normal;">$</div>
<div class="t" style="left:309.08px;width:60px;text-align:right;top:356.76px;font-size:8.3px;color:#333;font-weight:normal;transform:scaleX(0.925);transform-origin:100% 50%">17,844</div>
<div class="t" style="left:376.78px;top:356.76px;font-size:8.3px;color:#333;font-weight:normal;">$</div>
<div class="t" style="left:353.66px;width:60px;text-align:right;top:356.76px;font-size:8.3px;color:#333;font-weight:normal;transform:scaleX(0.925);transform-origin:100% 50%">14,906</div>
<div class="t" style="left:421.36px;top:356.76px;font-size:8.3px;color:#333;font-weight:normal;">$</div>
<div class="t" style="left:398.24px;width:60px;text-align:right;top:356.76px;font-size:8.3px;color:#333;font-weight:normal;transform:scaleX(0.925);transform-origin:100% 50%">15,763</div>
<div class="t" style="left:465.94px;top:356.76px;font-size:8.3px;color:#333;font-weight:normal;">$</div>
<div class="t" style="left:442.82px;width:60px;text-align:right;top:356.76px;font-size:8.3px;color:#333;font-weight:normal;transform:scaleX(0.925);transform-origin:100% 50%">18,729</div>
<div class="t" style="left:510.52px;top:356.76px;font-size:8.3px;color:#333;font-weight:normal;">$</div>
<div class="t" style="left:487.40px;width:60px;text-align:right;top:356.76px;font-size:8.3px;color:#333;font-weight:normal;transform:scaleX(0.925);transform-origin:100% 50%">9,573</div>
<div class="t" style="left:555.10px;top:356.76px;font-size:8.3px;color:#333;font-weight:normal;">$</div>
<div class="t" style="left:531.98px;width:60px;text-align:right;top:356.76px;font-size:8.3px;color:#333;font-weight:normal;transform:scaleX(0.925);transform-origin:100% 50%">10,879</div>
<div class="t" style="left:599.68px;top:356.76px;font-size:8.3px;color:#333;font-weight:normal;">$</div>
<div class="t" style="left:576.56px;width:60px;text-align:right;top:356.76px;font-size:8.3px;color:#333;font-weight:normal;transform:scaleX(0.925);transform-origin:100% 50%">12,931</div>
<div class="t" style="left:644.26px;top:356.76px;font-size:8.3px;color:#333;font-weight:normal;">$</div>
<div class="t" style="left:621.14px;width:60px;text-align:right;top:356.76px;font-size:8.3px;color:#333;font-weight:normal;transform:scaleX(0.925);transform-origin:100% 50%">16,881</div>
<div class="t" style="left:688.84px;top:356.76px;font-size:8.3px;color:#333;font-weight:normal;">$</div>
<div class="t" style="left:665.72px;width:60px;text-align:right;top:356.76px;font-size:8.3px;color:#333;font-weight:normal;transform:scaleX(0.925);transform-origin:100% 50%">18,525</div>
<div class="t" style="left:733.42px;top:356.76px;font-size:8.3px;color:#333;font-weight:normal;">$</div>
<div class="t" style="left:710.30px;width:60px;text-align:right;top:356.76px;font-size:8.3px;color:#333;font-weight:normal;transform:scaleX(0.925);transform-origin:100% 50%">11,118</div>
<div class="t" style="left:778.00px;top:356.76px;font-size:8.3px;color:#333;font-weight:normal;">$</div>
<div class="t" style="left:754.88px;width:60px;text-align:right;top:356.76px;font-size:8.3px;color:#333;font-weight:normal;transform:scaleX(0.925);transform-origin:100% 50%">15,063</div>
<div class="t" style="left:822.58px;top:356.76px;font-size:8.3px;color:#333;font-weight:normal;">$</div>
<div class="t" style="left:799.46px;width:60px;text-align:right;top:356.76px;font-size:8.3px;color:#333;font-weight:normal;transform:scaleX(0.925);transform-origin:100% 50%">15,796</div>
<div class="a" style="left:863.70px;top:354.60px;width:56.20px;height:11.95px;background:#ffeb84"></div>
<div class="t" style="left:866.50px;top:356.76px;font-size:8.3px;color:#333;font-weight:normal;">$</div>
<div class="t" style="left:855.40px;width:60px;text-align:right;top:356.76px;font-size:8.3px;color:#333;font-weight:normal;transform:scaleX(0.925);transform-origin:100% 50%">178,005</div>
<div class="t" style="left:332.20px;top:368.71px;font-size:8.3px;color:#333;font-weight:normal;">$</div>
<div class="t" style="left:309.08px;width:60px;text-align:right;top:368.71px;font-size:8.3px;color:#333;font-weight:normal;transform:scaleX(0.925);transform-origin:100% 50%">7,858</div>
<div class="t" style="left:376.78px;top:368.71px;font-size:8.3px;color:#333;font-weight:normal;">$</div>
<div class="t" style="left:353.66px;width:60px;text-align:right;top:368.71px;font-size:8.3px;color:#333;font-weight:normal;transform:scaleX(0.925);transform-origin:100% 50%">8,052</div>
<div class="t" style="left:421.36px;top:368.71px;font-size:8.3px;color:#333;font-weight:normal;">$</div>
<div class="t" style="left:398.24px;width:60px;text-align:right;top:368.71px;font-size:8.3px;color:#333;font-weight:normal;transform:scaleX(0.925);transform-origin:100% 50%">9,889</div>
<div class="t" style="left:465.94px;top:368.71px;font-size:8.3px;color:#333;font-weight:normal;">$</div>
<div class="t" style="left:442.82px;width:60px;text-align:right;top:368.71px;font-size:8.3px;color:#333;font-weight:normal;transform:scaleX(0.925);transform-origin:100% 50%">8,752</div>
<div class="t" style="left:510.52px;top:368.71px;font-size:8.3px;color:#333;font-weight:normal;">$</div>
<div class="t" style="left:487.40px;width:60px;text-align:right;top:368.71px;font-size:8.3px;color:#333;font-weight:normal;transform:scaleX(0.925);transform-origin:100% 50%">11,817</div>
<div class="t" style="left:555.10px;top:368.71px;font-size:8.3px;color:#333;font-weight:normal;">$</div>
<div class="t" style="left:531.98px;width:60px;text-align:right;top:368.71px;font-size:8.3px;color:#333;font-weight:normal;transform:scaleX(0.925);transform-origin:100% 50%">11,772</div>
<div class="t" style="left:599.68px;top:368.71px;font-size:8.3px;color:#333;font-weight:normal;">$</div>
<div class="t" style="left:576.56px;width:60px;text-align:right;top:368.71px;font-size:8.3px;color:#333;font-weight:normal;transform:scaleX(0.925);transform-origin:100% 50%">15,301</div>
<div class="t" style="left:644.26px;top:368.71px;font-size:8.3px;color:#333;font-weight:normal;">$</div>
<div class="t" style="left:621.14px;width:60px;text-align:right;top:368.71px;font-size:8.3px;color:#333;font-weight:normal;transform:scaleX(0.925);transform-origin:100% 50%">11,759</div>
<div class="t" style="left:688.84px;top:368.71px;font-size:8.3px;color:#333;font-weight:normal;">$</div>
<div class="t" style="left:665.72px;width:60px;text-align:right;top:368.71px;font-size:8.3px;color:#333;font-weight:normal;transform:scaleX(0.925);transform-origin:100% 50%">11,384</div>
<div class="t" style="left:733.42px;top:368.71px;font-size:8.3px;color:#333;font-weight:normal;">$</div>
<div class="t" style="left:710.30px;width:60px;text-align:right;top:368.71px;font-size:8.3px;color:#333;font-weight:normal;transform:scaleX(0.925);transform-origin:100% 50%">10,587</div>
<div class="t" style="left:778.00px;top:368.71px;font-size:8.3px;color:#333;font-weight:normal;">$</div>
<div class="t" style="left:754.88px;width:60px;text-align:right;top:368.71px;font-size:8.3px;color:#333;font-weight:normal;transform:scaleX(0.925);transform-origin:100% 50%">15,366</div>
<div class="t" style="left:822.58px;top:368.71px;font-size:8.3px;color:#333;font-weight:normal;">$</div>
<div class="t" style="left:799.46px;width:60px;text-align:right;top:368.71px;font-size:8.3px;color:#333;font-weight:normal;transform:scaleX(0.925);transform-origin:100% 50%">10,300</div>
<div class="a" style="left:863.70px;top:366.55px;width:56.20px;height:11.95px;background:#fdc87d"></div>
<div class="t" style="left:866.50px;top:368.71px;font-size:8.3px;color:#333;font-weight:normal;">$</div>
<div class="t" style="left:855.40px;width:60px;text-align:right;top:368.71px;font-size:8.3px;color:#333;font-weight:normal;transform:scaleX(0.925);transform-origin:100% 50%">132,837</div>
<div class="t" style="left:332.20px;top:380.66px;font-size:8.3px;color:#333;font-weight:normal;">$</div>
<div class="t" style="left:309.08px;width:60px;text-align:right;top:380.66px;font-size:8.3px;color:#333;font-weight:normal;transform:scaleX(0.925);transform-origin:100% 50%">7,093</div>
<div class="t" style="left:376.78px;top:380.66px;font-size:8.3px;color:#333;font-weight:normal;">$</div>
<div class="t" style="left:353.66px;width:60px;text-align:right;top:380.66px;font-size:8.3px;color:#333;font-weight:normal;transform:scaleX(0.925);transform-origin:100% 50%">14,801</div>
<div class="t" style="left:421.36px;top:380.66px;font-size:8.3px;color:#333;font-weight:normal;">$</div>
<div class="t" style="left:398.24px;width:60px;text-align:right;top:380.66px;font-size:8.3px;color:#333;font-weight:normal;transform:scaleX(0.925);transform-origin:100% 50%">9,989</div>
<div class="t" style="left:465.94px;top:380.66px;font-size:8.3px;color:#333;font-weight:normal;">$</div>
<div class="t" style="left:442.82px;width:60px;text-align:right;top:380.66px;font-size:8.3px;color:#333;font-weight:normal;transform:scaleX(0.925);transform-origin:100% 50%">10,174</div>
<div class="t" style="left:510.52px;top:380.66px;font-size:8.3px;color:#333;font-weight:normal;">$</div>
<div class="t" style="left:487.40px;width:60px;text-align:right;top:380.66px;font-size:8.3px;color:#333;font-weight:normal;transform:scaleX(0.925);transform-origin:100% 50%">8,622</div>
<div class="t" style="left:555.10px;top:380.66px;font-size:8.3px;color:#333;font-weight:normal;">$</div>
<div class="t" style="left:531.98px;width:60px;text-align:right;top:380.66px;font-size:8.3px;color:#333;font-weight:normal;transform:scaleX(0.925);transform-origin:100% 50%">10,869</div>
<div class="t" style="left:599.68px;top:380.66px;font-size:8.3px;color:#333;font-weight:normal;">$</div>
<div class="t" style="left:576.56px;width:60px;text-align:right;top:380.66px;font-size:8.3px;color:#333;font-weight:normal;transform:scaleX(0.925);transform-origin:100% 50%">8,508</div>
<div class="t" style="left:644.26px;top:380.66px;font-size:8.3px;color:#333;font-weight:normal;">$</div>
<div class="t" style="left:621.14px;width:60px;text-align:right;top:380.66px;font-size:8.3px;color:#333;font-weight:normal;transform:scaleX(0.925);transform-origin:100% 50%">11,199</div>
<div class="t" style="left:688.84px;top:380.66px;font-size:8.3px;color:#333;font-weight:normal;">$</div>
<div class="t" style="left:665.72px;width:60px;text-align:right;top:380.66px;font-size:8.3px;color:#333;font-weight:normal;transform:scaleX(0.925);transform-origin:100% 50%">8,846</div>
<div class="t" style="left:733.42px;top:380.66px;font-size:8.3px;color:#333;font-weight:normal;">$</div>
<div class="t" style="left:710.30px;width:60px;text-align:right;top:380.66px;font-size:8.3px;color:#333;font-weight:normal;transform:scaleX(0.925);transform-origin:100% 50%">11,925</div>
<div class="t" style="left:778.00px;top:380.66px;font-size:8.3px;color:#333;font-weight:normal;">$</div>
<div class="t" style="left:754.88px;width:60px;text-align:right;top:380.66px;font-size:8.3px;color:#333;font-weight:normal;transform:scaleX(0.925);transform-origin:100% 50%">12,227</div>
<div class="t" style="left:822.58px;top:380.66px;font-size:8.3px;color:#333;font-weight:normal;">$</div>
<div class="t" style="left:799.46px;width:60px;text-align:right;top:380.66px;font-size:8.3px;color:#333;font-weight:normal;transform:scaleX(0.925);transform-origin:100% 50%">11,934</div>
<div class="a" style="left:863.70px;top:378.50px;width:56.20px;height:11.95px;background:#fdc37c"></div>
<div class="t" style="left:866.50px;top:380.66px;font-size:8.3px;color:#333;font-weight:normal;">$</div>
<div class="t" style="left:855.40px;width:60px;text-align:right;top:380.66px;font-size:8.3px;color:#333;font-weight:normal;transform:scaleX(0.925);transform-origin:100% 50%">126,183</div>
<div class="t" style="left:332.20px;top:392.61px;font-size:8.3px;color:#333;font-weight:normal;">$</div>
<div class="t" style="left:309.08px;width:60px;text-align:right;top:392.61px;font-size:8.3px;color:#333;font-weight:normal;transform:scaleX(0.925);transform-origin:100% 50%">1,722</div>
<div class="t" style="left:376.78px;top:392.61px;font-size:8.3px;color:#333;font-weight:normal;">$</div>
<div class="t" style="left:353.66px;width:60px;text-align:right;top:392.61px;font-size:8.3px;color:#333;font-weight:normal;transform:scaleX(0.925);transform-origin:100% 50%">3,182</div>
<div class="t" style="left:421.36px;top:392.61px;font-size:8.3px;color:#333;font-weight:normal;">$</div>
<div class="t" style="left:398.24px;width:60px;text-align:right;top:392.61px;font-size:8.3px;color:#333;font-weight:normal;transform:scaleX(0.925);transform-origin:100% 50%">3,557</div>
<div class="t" style="left:465.94px;top:392.61px;font-size:8.3px;color:#333;font-weight:normal;">$</div>
<div class="t" style="left:442.82px;width:60px;text-align:right;top:392.61px;font-size:8.3px;color:#333;font-weight:normal;transform:scaleX(0.925);transform-origin:100% 50%">3,863</div>
<div class="t" style="left:510.52px;top:392.61px;font-size:8.3px;color:#333;font-weight:normal;">$</div>
<div class="t" style="left:487.40px;width:60px;text-align:right;top:392.61px;font-size:8.3px;color:#333;font-weight:normal;transform:scaleX(0.925);transform-origin:100% 50%">4,040</div>
<div class="t" style="left:555.10px;top:392.61px;font-size:8.3px;color:#333;font-weight:normal;">$</div>
<div class="t" style="left:531.98px;width:60px;text-align:right;top:392.61px;font-size:8.3px;color:#333;font-weight:normal;transform:scaleX(0.925);transform-origin:100% 50%">2,742</div>
<div class="t" style="left:599.68px;top:392.61px;font-size:8.3px;color:#333;font-weight:normal;">$</div>
<div class="t" style="left:576.56px;width:60px;text-align:right;top:392.61px;font-size:8.3px;color:#333;font-weight:normal;transform:scaleX(0.925);transform-origin:100% 50%">5,226</div>
<div class="t" style="left:644.26px;top:392.61px;font-size:8.3px;color:#333;font-weight:normal;">$</div>
<div class="t" style="left:621.14px;width:60px;text-align:right;top:392.61px;font-size:8.3px;color:#333;font-weight:normal;transform:scaleX(0.925);transform-origin:100% 50%">2,265</div>
<div class="t" style="left:688.84px;top:392.61px;font-size:8.3px;color:#333;font-weight:normal;">$</div>
<div class="t" style="left:665.72px;width:60px;text-align:right;top:392.61px;font-size:8.3px;color:#333;font-weight:normal;transform:scaleX(0.925);transform-origin:100% 50%">2,685</div>
<div class="t" style="left:733.42px;top:392.61px;font-size:8.3px;color:#333;font-weight:normal;">$</div>
<div class="t" style="left:710.30px;width:60px;text-align:right;top:392.61px;font-size:8.3px;color:#333;font-weight:normal;transform:scaleX(0.925);transform-origin:100% 50%">2,504</div>
<div class="t" style="left:778.00px;top:392.61px;font-size:8.3px;color:#333;font-weight:normal;">$</div>
<div class="t" style="left:754.88px;width:60px;text-align:right;top:392.61px;font-size:8.3px;color:#333;font-weight:normal;transform:scaleX(0.925);transform-origin:100% 50%">1,137</div>
<div class="t" style="left:822.58px;top:392.61px;font-size:8.3px;color:#333;font-weight:normal;">$</div>
<div class="t" style="left:799.46px;width:60px;text-align:right;top:392.61px;font-size:8.3px;color:#333;font-weight:normal;transform:scaleX(0.925);transform-origin:100% 50%">3,578</div>
<div class="a" style="left:863.70px;top:390.45px;width:56.20px;height:11.95px;background:#f97d6f"></div>
<div class="t" style="left:866.50px;top:392.61px;font-size:8.3px;color:#333;font-weight:normal;">$</div>
<div class="t" style="left:855.40px;width:60px;text-align:right;top:392.61px;font-size:8.3px;color:#333;font-weight:normal;transform:scaleX(0.925);transform-origin:100% 50%">36,498</div>
<div class="t" style="left:332.20px;top:404.56px;font-size:8.3px;color:#333;font-weight:normal;">$</div>
<div class="t" style="left:309.08px;width:60px;text-align:right;top:404.56px;font-size:8.3px;color:#333;font-weight:normal;transform:scaleX(0.925);transform-origin:100% 50%">1,090</div>
<div class="t" style="left:376.78px;top:404.56px;font-size:8.3px;color:#333;font-weight:normal;">$</div>
<div class="t" style="left:353.66px;width:60px;text-align:right;top:404.56px;font-size:8.3px;color:#333;font-weight:normal;transform:scaleX(0.925);transform-origin:100% 50%">963</div>
<div class="t" style="left:421.36px;top:404.56px;font-size:8.3px;color:#333;font-weight:normal;">$</div>
<div class="t" style="left:398.24px;width:60px;text-align:right;top:404.56px;font-size:8.3px;color:#333;font-weight:normal;transform:scaleX(0.925);transform-origin:100% 50%">928</div>
<div class="t" style="left:465.94px;top:404.56px;font-size:8.3px;color:#333;font-weight:normal;">$</div>
<div class="t" style="left:442.82px;width:60px;text-align:right;top:404.56px;font-size:8.3px;color:#333;font-weight:normal;transform:scaleX(0.925);transform-origin:100% 50%">823</div>
<div class="t" style="left:510.52px;top:404.56px;font-size:8.3px;color:#333;font-weight:normal;">$</div>
<div class="t" style="left:487.40px;width:60px;text-align:right;top:404.56px;font-size:8.3px;color:#333;font-weight:normal;transform:scaleX(0.925);transform-origin:100% 50%">533</div>
<div class="t" style="left:555.10px;top:404.56px;font-size:8.3px;color:#333;font-weight:normal;">$</div>
<div class="t" style="left:531.98px;width:60px;text-align:right;top:404.56px;font-size:8.3px;color:#333;font-weight:normal;transform:scaleX(0.925);transform-origin:100% 50%">485</div>
<div class="t" style="left:599.68px;top:404.56px;font-size:8.3px;color:#333;font-weight:normal;">$</div>
<div class="t" style="left:576.56px;width:60px;text-align:right;top:404.56px;font-size:8.3px;color:#333;font-weight:normal;transform:scaleX(0.925);transform-origin:100% 50%">1,273</div>
<div class="t" style="left:644.26px;top:404.56px;font-size:8.3px;color:#333;font-weight:normal;">$</div>
<div class="t" style="left:621.14px;width:60px;text-align:right;top:404.56px;font-size:8.3px;color:#333;font-weight:normal;transform:scaleX(0.925);transform-origin:100% 50%">995</div>
<div class="t" style="left:688.84px;top:404.56px;font-size:8.3px;color:#333;font-weight:normal;">$</div>
<div class="t" style="left:665.72px;width:60px;text-align:right;top:404.56px;font-size:8.3px;color:#333;font-weight:normal;transform:scaleX(0.925);transform-origin:100% 50%">760</div>
<div class="t" style="left:733.42px;top:404.56px;font-size:8.3px;color:#333;font-weight:normal;">$</div>
<div class="t" style="left:710.30px;width:60px;text-align:right;top:404.56px;font-size:8.3px;color:#333;font-weight:normal;transform:scaleX(0.925);transform-origin:100% 50%">913</div>
<div class="t" style="left:778.00px;top:404.56px;font-size:8.3px;color:#333;font-weight:normal;">$</div>
<div class="t" style="left:754.88px;width:60px;text-align:right;top:404.56px;font-size:8.3px;color:#333;font-weight:normal;transform:scaleX(0.925);transform-origin:100% 50%">1,330</div>
<div class="t" style="left:822.58px;top:404.56px;font-size:8.3px;color:#333;font-weight:normal;">$</div>
<div class="t" style="left:799.46px;width:60px;text-align:right;top:404.56px;font-size:8.3px;color:#333;font-weight:normal;transform:scaleX(0.925);transform-origin:100% 50%">635</div>
<div class="a" style="left:863.70px;top:402.40px;width:56.20px;height:11.95px;background:#f8696b"></div>
<div class="t" style="left:866.50px;top:404.56px;font-size:8.3px;color:#333;font-weight:normal;">$</div>
<div class="t" style="left:855.40px;width:60px;text-align:right;top:404.56px;font-size:8.3px;color:#333;font-weight:normal;transform:scaleX(0.925);transform-origin:100% 50%">10,725</div>
<div class="t" style="left:332.20px;top:416.51px;font-size:8.3px;color:#333;font-weight:normal;">$</div>
<div class="t" style="left:309.08px;width:60px;text-align:right;top:416.51px;font-size:8.3px;color:#333;font-weight:normal;transform:scaleX(0.925);transform-origin:100% 50%">9,196</div>
<div class="t" style="left:376.78px;top:416.51px;font-size:8.3px;color:#333;font-weight:normal;">$</div>
<div class="t" style="left:353.66px;width:60px;text-align:right;top:416.51px;font-size:8.3px;color:#333;font-weight:normal;transform:scaleX(0.925);transform-origin:100% 50%">9,308</div>
<div class="t" style="left:421.36px;top:416.51px;font-size:8.3px;color:#333;font-weight:normal;">$</div>
<div class="t" style="left:398.24px;width:60px;text-align:right;top:416.51px;font-size:8.3px;color:#333;font-weight:normal;transform:scaleX(0.925);transform-origin:100% 50%">10,584</div>
<div class="t" style="left:465.94px;top:416.51px;font-size:8.3px;color:#333;font-weight:normal;">$</div>
<div class="t" style="left:442.82px;width:60px;text-align:right;top:416.51px;font-size:8.3px;color:#333;font-weight:normal;transform:scaleX(0.925);transform-origin:100% 50%">9,180</div>
<div class="t" style="left:510.52px;top:416.51px;font-size:8.3px;color:#333;font-weight:normal;">$</div>
<div class="t" style="left:487.40px;width:60px;text-align:right;top:416.51px;font-size:8.3px;color:#333;font-weight:normal;transform:scaleX(0.925);transform-origin:100% 50%">6,380</div>
<div class="t" style="left:555.10px;top:416.51px;font-size:8.3px;color:#333;font-weight:normal;">$</div>
<div class="t" style="left:531.98px;width:60px;text-align:right;top:416.51px;font-size:8.3px;color:#333;font-weight:normal;transform:scaleX(0.925);transform-origin:100% 50%">10,808</div>
<div class="t" style="left:599.68px;top:416.51px;font-size:8.3px;color:#333;font-weight:normal;">$</div>
<div class="t" style="left:576.56px;width:60px;text-align:right;top:416.51px;font-size:8.3px;color:#333;font-weight:normal;transform:scaleX(0.925);transform-origin:100% 50%">9,436</div>
<div class="t" style="left:644.26px;top:416.51px;font-size:8.3px;color:#333;font-weight:normal;">$</div>
<div class="t" style="left:621.14px;width:60px;text-align:right;top:416.51px;font-size:8.3px;color:#333;font-weight:normal;transform:scaleX(0.925);transform-origin:100% 50%">10,324</div>
<div class="t" style="left:688.84px;top:416.51px;font-size:8.3px;color:#333;font-weight:normal;">$</div>
<div class="t" style="left:665.72px;width:60px;text-align:right;top:416.51px;font-size:8.3px;color:#333;font-weight:normal;transform:scaleX(0.925);transform-origin:100% 50%">6,272</div>
<div class="t" style="left:733.42px;top:416.51px;font-size:8.3px;color:#333;font-weight:normal;">$</div>
<div class="t" style="left:710.30px;width:60px;text-align:right;top:416.51px;font-size:8.3px;color:#333;font-weight:normal;transform:scaleX(0.925);transform-origin:100% 50%">12,284</div>
<div class="t" style="left:778.00px;top:416.51px;font-size:8.3px;color:#333;font-weight:normal;">$</div>
<div class="t" style="left:754.88px;width:60px;text-align:right;top:416.51px;font-size:8.3px;color:#333;font-weight:normal;transform:scaleX(0.925);transform-origin:100% 50%">7,224</div>
<div class="t" style="left:822.58px;top:416.51px;font-size:8.3px;color:#333;font-weight:normal;">$</div>
<div class="t" style="left:799.46px;width:60px;text-align:right;top:416.51px;font-size:8.3px;color:#333;font-weight:normal;transform:scaleX(0.925);transform-origin:100% 50%">10,188</div>
<div class="a" style="left:863.70px;top:414.35px;width:56.20px;height:11.95px;background:#fcb77a"></div>
<div class="t" style="left:866.50px;top:416.51px;font-size:8.3px;color:#333;font-weight:normal;">$</div>
<div class="t" style="left:855.40px;width:60px;text-align:right;top:416.51px;font-size:8.3px;color:#333;font-weight:normal;transform:scaleX(0.925);transform-origin:100% 50%">111,184</div>
<div class="t" style="left:332.20px;top:428.59px;font-size:8.3px;color:#111;font-weight:bold;">$</div>
<div class="t" style="left:309.08px;width:60px;text-align:right;top:428.59px;font-size:8.3px;color:#111;font-weight:bold;transform:scaleX(0.925);transform-origin:100% 50%">46,698</div>
<div class="t" style="left:376.78px;top:428.59px;font-size:8.3px;color:#111;font-weight:bold;">$</div>
<div class="t" style="left:353.66px;width:60px;text-align:right;top:428.59px;font-size:8.3px;color:#111;font-weight:bold;transform:scaleX(0.925);transform-origin:100% 50%">40,001</div>
<div class="t" style="left:421.36px;top:428.59px;font-size:8.3px;color:#111;font-weight:bold;">$</div>
<div class="t" style="left:398.24px;width:60px;text-align:right;top:428.59px;font-size:8.3px;color:#111;font-weight:bold;transform:scaleX(0.925);transform-origin:100% 50%">50,351</div>
<div class="t" style="left:465.94px;top:428.59px;font-size:8.3px;color:#111;font-weight:bold;">$</div>
<div class="t" style="left:442.82px;width:60px;text-align:right;top:428.59px;font-size:8.3px;color:#111;font-weight:bold;transform:scaleX(0.925);transform-origin:100% 50%">47,955</div>
<div class="t" style="left:510.52px;top:428.59px;font-size:8.3px;color:#111;font-weight:bold;">$</div>
<div class="t" style="left:487.40px;width:60px;text-align:right;top:428.59px;font-size:8.3px;color:#111;font-weight:bold;transform:scaleX(0.925);transform-origin:100% 50%">53,892</div>
<div class="t" style="left:555.10px;top:428.59px;font-size:8.3px;color:#111;font-weight:bold;">$</div>
<div class="t" style="left:531.98px;width:60px;text-align:right;top:428.59px;font-size:8.3px;color:#111;font-weight:bold;transform:scaleX(0.925);transform-origin:100% 50%">53,569</div>
<div class="t" style="left:599.68px;top:428.59px;font-size:8.3px;color:#111;font-weight:bold;">$</div>
<div class="t" style="left:576.56px;width:60px;text-align:right;top:428.59px;font-size:8.3px;color:#111;font-weight:bold;transform:scaleX(0.925);transform-origin:100% 50%">43,936</div>
<div class="t" style="left:644.26px;top:428.59px;font-size:8.3px;color:#111;font-weight:bold;">$</div>
<div class="t" style="left:621.14px;width:60px;text-align:right;top:428.59px;font-size:8.3px;color:#111;font-weight:bold;transform:scaleX(0.925);transform-origin:100% 50%">49,565</div>
<div class="t" style="left:688.84px;top:428.59px;font-size:8.3px;color:#111;font-weight:bold;">$</div>
<div class="t" style="left:665.72px;width:60px;text-align:right;top:428.59px;font-size:8.3px;color:#111;font-weight:bold;transform:scaleX(0.925);transform-origin:100% 50%">48,059</div>
<div class="t" style="left:733.42px;top:428.59px;font-size:8.3px;color:#111;font-weight:bold;">$</div>
<div class="t" style="left:710.30px;width:60px;text-align:right;top:428.59px;font-size:8.3px;color:#111;font-weight:bold;transform:scaleX(0.925);transform-origin:100% 50%">53,182</div>
<div class="t" style="left:778.00px;top:428.59px;font-size:8.3px;color:#111;font-weight:bold;">$</div>
<div class="t" style="left:754.88px;width:60px;text-align:right;top:428.59px;font-size:8.3px;color:#111;font-weight:bold;transform:scaleX(0.925);transform-origin:100% 50%">45,873</div>
<div class="t" style="left:822.58px;top:428.59px;font-size:8.3px;color:#111;font-weight:bold;">$</div>
<div class="t" style="left:799.46px;width:60px;text-align:right;top:428.59px;font-size:8.3px;color:#111;font-weight:bold;transform:scaleX(0.925);transform-origin:100% 50%">44,543</div>
<div class="a" style="left:863.70px;top:426.30px;width:56.20px;height:12.20px;background:#fff"></div>
<div class="t" style="left:866.50px;top:428.59px;font-size:8.3px;color:#111;font-weight:bold;">$</div>
<div class="t" style="left:855.40px;width:60px;text-align:right;top:428.59px;font-size:8.3px;color:#111;font-weight:bold;transform:scaleX(0.925);transform-origin:100% 50%">577,621</div>
<div class="t" style="left:332.20px;top:440.66px;font-size:8.3px;color:#333;font-weight:normal;">$</div>
<div class="t" style="left:309.08px;width:60px;text-align:right;top:440.66px;font-size:8.3px;color:#333;font-weight:normal;transform:scaleX(0.925);transform-origin:100% 50%">11,862</div>
<div class="t" style="left:376.78px;top:440.66px;font-size:8.3px;color:#333;font-weight:normal;">$</div>
<div class="t" style="left:353.66px;width:60px;text-align:right;top:440.66px;font-size:8.3px;color:#333;font-weight:normal;transform:scaleX(0.925);transform-origin:100% 50%">12,563</div>
<div class="t" style="left:421.36px;top:440.66px;font-size:8.3px;color:#333;font-weight:normal;">$</div>
<div class="t" style="left:398.24px;width:60px;text-align:right;top:440.66px;font-size:8.3px;color:#333;font-weight:normal;transform:scaleX(0.925);transform-origin:100% 50%">12,783</div>
<div class="t" style="left:465.94px;top:440.66px;font-size:8.3px;color:#333;font-weight:normal;">$</div>
<div class="t" style="left:442.82px;width:60px;text-align:right;top:440.66px;font-size:8.3px;color:#333;font-weight:normal;transform:scaleX(0.925);transform-origin:100% 50%">12,687</div>
<div class="t" style="left:510.52px;top:440.66px;font-size:8.3px;color:#333;font-weight:normal;">$</div>
<div class="t" style="left:487.40px;width:60px;text-align:right;top:440.66px;font-size:8.3px;color:#333;font-weight:normal;transform:scaleX(0.925);transform-origin:100% 50%">12,954</div>
<div class="t" style="left:555.10px;top:440.66px;font-size:8.3px;color:#333;font-weight:normal;">$</div>
<div class="t" style="left:531.98px;width:60px;text-align:right;top:440.66px;font-size:8.3px;color:#333;font-weight:normal;transform:scaleX(0.925);transform-origin:100% 50%">17,847</div>
<div class="t" style="left:599.68px;top:440.66px;font-size:8.3px;color:#333;font-weight:normal;">$</div>
<div class="t" style="left:576.56px;width:60px;text-align:right;top:440.66px;font-size:8.3px;color:#333;font-weight:normal;transform:scaleX(0.925);transform-origin:100% 50%">9,110</div>
<div class="t" style="left:644.26px;top:440.66px;font-size:8.3px;color:#333;font-weight:normal;">$</div>
<div class="t" style="left:621.14px;width:60px;text-align:right;top:440.66px;font-size:8.3px;color:#333;font-weight:normal;transform:scaleX(0.925);transform-origin:100% 50%">15,680</div>
<div class="t" style="left:688.84px;top:440.66px;font-size:8.3px;color:#333;font-weight:normal;">$</div>
<div class="t" style="left:665.72px;width:60px;text-align:right;top:440.66px;font-size:8.3px;color:#333;font-weight:normal;transform:scaleX(0.925);transform-origin:100% 50%">11,013</div>
<div class="t" style="left:733.42px;top:440.66px;font-size:8.3px;color:#333;font-weight:normal;">$</div>
<div class="t" style="left:710.30px;width:60px;text-align:right;top:440.66px;font-size:8.3px;color:#333;font-weight:normal;transform:scaleX(0.925);transform-origin:100% 50%">16,165</div>
<div class="t" style="left:778.00px;top:440.66px;font-size:8.3px;color:#333;font-weight:normal;">$</div>
<div class="t" style="left:754.88px;width:60px;text-align:right;top:440.66px;font-size:8.3px;color:#333;font-weight:normal;transform:scaleX(0.925);transform-origin:100% 50%">11,224</div>
<div class="t" style="left:822.58px;top:440.66px;font-size:8.3px;color:#333;font-weight:normal;">$</div>
<div class="t" style="left:799.46px;width:60px;text-align:right;top:440.66px;font-size:8.3px;color:#333;font-weight:normal;transform:scaleX(0.925);transform-origin:100% 50%">13,547</div>
<div class="a" style="left:863.70px;top:438.50px;width:56.20px;height:11.95px;background:#fedb81"></div>
<div class="t" style="left:866.50px;top:440.66px;font-size:8.3px;color:#333;font-weight:normal;">$</div>
<div class="t" style="left:855.40px;width:60px;text-align:right;top:440.66px;font-size:8.3px;color:#333;font-weight:normal;transform:scaleX(0.925);transform-origin:100% 50%">157,432</div>
<div class="t" style="left:332.20px;top:452.61px;font-size:8.3px;color:#333;font-weight:normal;">$</div>
<div class="t" style="left:309.08px;width:60px;text-align:right;top:452.61px;font-size:8.3px;color:#333;font-weight:normal;transform:scaleX(0.925);transform-origin:100% 50%">10,114</div>
<div class="t" style="left:376.78px;top:452.61px;font-size:8.3px;color:#333;font-weight:normal;">$</div>
<div class="t" style="left:353.66px;width:60px;text-align:right;top:452.61px;font-size:8.3px;color:#333;font-weight:normal;transform:scaleX(0.925);transform-origin:100% 50%">9,943</div>
<div class="t" style="left:421.36px;top:452.61px;font-size:8.3px;color:#333;font-weight:normal;">$</div>
<div class="t" style="left:398.24px;width:60px;text-align:right;top:452.61px;font-size:8.3px;color:#333;font-weight:normal;transform:scaleX(0.925);transform-origin:100% 50%">13,166</div>
<div class="t" style="left:465.94px;top:452.61px;font-size:8.3px;color:#333;font-weight:normal;">$</div>
<div class="t" style="left:442.82px;width:60px;text-align:right;top:452.61px;font-size:8.3px;color:#333;font-weight:normal;transform:scaleX(0.925);transform-origin:100% 50%">12,934</div>
<div class="t" style="left:510.52px;top:452.61px;font-size:8.3px;color:#333;font-weight:normal;">$</div>
<div class="t" style="left:487.40px;width:60px;text-align:right;top:452.61px;font-size:8.3px;color:#333;font-weight:normal;transform:scaleX(0.925);transform-origin:100% 50%">12,148</div>
<div class="t" style="left:555.10px;top:452.61px;font-size:8.3px;color:#333;font-weight:normal;">$</div>
<div class="t" style="left:531.98px;width:60px;text-align:right;top:452.61px;font-size:8.3px;color:#333;font-weight:normal;transform:scaleX(0.925);transform-origin:100% 50%">10,707</div>
<div class="t" style="left:599.68px;top:452.61px;font-size:8.3px;color:#333;font-weight:normal;">$</div>
<div class="t" style="left:576.56px;width:60px;text-align:right;top:452.61px;font-size:8.3px;color:#333;font-weight:normal;transform:scaleX(0.925);transform-origin:100% 50%">16,364</div>
<div class="t" style="left:644.26px;top:452.61px;font-size:8.3px;color:#333;font-weight:normal;">$</div>
<div class="t" style="left:621.14px;width:60px;text-align:right;top:452.61px;font-size:8.3px;color:#333;font-weight:normal;transform:scaleX(0.925);transform-origin:100% 50%">10,148</div>
<div class="t" style="left:688.84px;top:452.61px;font-size:8.3px;color:#333;font-weight:normal;">$</div>
<div class="t" style="left:665.72px;width:60px;text-align:right;top:452.61px;font-size:8.3px;color:#333;font-weight:normal;transform:scaleX(0.925);transform-origin:100% 50%">12,984</div>
<div class="t" style="left:733.42px;top:452.61px;font-size:8.3px;color:#333;font-weight:normal;">$</div>
<div class="t" style="left:710.30px;width:60px;text-align:right;top:452.61px;font-size:8.3px;color:#333;font-weight:normal;transform:scaleX(0.925);transform-origin:100% 50%">16,947</div>
<div class="t" style="left:778.00px;top:452.61px;font-size:8.3px;color:#333;font-weight:normal;">$</div>
<div class="t" style="left:754.88px;width:60px;text-align:right;top:452.61px;font-size:8.3px;color:#333;font-weight:normal;transform:scaleX(0.925);transform-origin:100% 50%">14,181</div>
<div class="t" style="left:822.58px;top:452.61px;font-size:8.3px;color:#333;font-weight:normal;">$</div>
<div class="t" style="left:799.46px;width:60px;text-align:right;top:452.61px;font-size:8.3px;color:#333;font-weight:normal;transform:scaleX(0.925);transform-origin:100% 50%">8,314</div>
<div class="a" style="left:863.70px;top:450.45px;width:56.20px;height:11.95px;background:#fed480"></div>
<div class="t" style="left:866.50px;top:452.61px;font-size:8.3px;color:#333;font-weight:normal;">$</div>
<div class="t" style="left:855.40px;width:60px;text-align:right;top:452.61px;font-size:8.3px;color:#333;font-weight:normal;transform:scaleX(0.925);transform-origin:100% 50%">147,950</div>
<div class="t" style="left:332.20px;top:464.56px;font-size:8.3px;color:#333;font-weight:normal;">$</div>
<div class="t" style="left:309.08px;width:60px;text-align:right;top:464.56px;font-size:8.3px;color:#333;font-weight:normal;transform:scaleX(0.925);transform-origin:100% 50%">11,769</div>
<div class="t" style="left:376.78px;top:464.56px;font-size:8.3px;color:#333;font-weight:normal;">$</div>
<div class="t" style="left:353.66px;width:60px;text-align:right;top:464.56px;font-size:8.3px;color:#333;font-weight:normal;transform:scaleX(0.925);transform-origin:100% 50%">9,210</div>
<div class="t" style="left:421.36px;top:464.56px;font-size:8.3px;color:#333;font-weight:normal;">$</div>
<div class="t" style="left:398.24px;width:60px;text-align:right;top:464.56px;font-size:8.3px;color:#333;font-weight:normal;transform:scaleX(0.925);transform-origin:100% 50%">11,286</div>
<div class="t" style="left:465.94px;top:464.56px;font-size:8.3px;color:#333;font-weight:normal;">$</div>
<div class="t" style="left:442.82px;width:60px;text-align:right;top:464.56px;font-size:8.3px;color:#333;font-weight:normal;transform:scaleX(0.925);transform-origin:100% 50%">9,659</div>
<div class="t" style="left:510.52px;top:464.56px;font-size:8.3px;color:#333;font-weight:normal;">$</div>
<div class="t" style="left:487.40px;width:60px;text-align:right;top:464.56px;font-size:8.3px;color:#333;font-weight:normal;transform:scaleX(0.925);transform-origin:100% 50%">17,443</div>
<div class="t" style="left:555.10px;top:464.56px;font-size:8.3px;color:#333;font-weight:normal;">$</div>
<div class="t" style="left:531.98px;width:60px;text-align:right;top:464.56px;font-size:8.3px;color:#333;font-weight:normal;transform:scaleX(0.925);transform-origin:100% 50%">11,201</div>
<div class="t" style="left:599.68px;top:464.56px;font-size:8.3px;color:#333;font-weight:normal;">$</div>
<div class="t" style="left:576.56px;width:60px;text-align:right;top:464.56px;font-size:8.3px;color:#333;font-weight:normal;transform:scaleX(0.925);transform-origin:100% 50%">8,339</div>
<div class="t" style="left:644.26px;top:464.56px;font-size:8.3px;color:#333;font-weight:normal;">$</div>
<div class="t" style="left:621.14px;width:60px;text-align:right;top:464.56px;font-size:8.3px;color:#333;font-weight:normal;transform:scaleX(0.925);transform-origin:100% 50%">10,615</div>
<div class="t" style="left:688.84px;top:464.56px;font-size:8.3px;color:#333;font-weight:normal;">$</div>
<div class="t" style="left:665.72px;width:60px;text-align:right;top:464.56px;font-size:8.3px;color:#333;font-weight:normal;transform:scaleX(0.925);transform-origin:100% 50%">7,295</div>
<div class="t" style="left:733.42px;top:464.56px;font-size:8.3px;color:#333;font-weight:normal;">$</div>
<div class="t" style="left:710.30px;width:60px;text-align:right;top:464.56px;font-size:8.3px;color:#333;font-weight:normal;transform:scaleX(0.925);transform-origin:100% 50%">11,132</div>
<div class="t" style="left:778.00px;top:464.56px;font-size:8.3px;color:#333;font-weight:normal;">$</div>
<div class="t" style="left:754.88px;width:60px;text-align:right;top:464.56px;font-size:8.3px;color:#333;font-weight:normal;transform:scaleX(0.925);transform-origin:100% 50%">9,265</div>
<div class="t" style="left:822.58px;top:464.56px;font-size:8.3px;color:#333;font-weight:normal;">$</div>
<div class="t" style="left:799.46px;width:60px;text-align:right;top:464.56px;font-size:8.3px;color:#333;font-weight:normal;transform:scaleX(0.925);transform-origin:100% 50%">9,793</div>
<div class="a" style="left:863.70px;top:462.40px;width:56.20px;height:11.95px;background:#fdc37c"></div>
<div class="t" style="left:866.50px;top:464.56px;font-size:8.3px;color:#333;font-weight:normal;">$</div>
<div class="t" style="left:855.40px;width:60px;text-align:right;top:464.56px;font-size:8.3px;color:#333;font-weight:normal;transform:scaleX(0.925);transform-origin:100% 50%">127,004</div>
<div class="t" style="left:332.20px;top:476.51px;font-size:8.3px;color:#333;font-weight:normal;">$</div>
<div class="t" style="left:309.08px;width:60px;text-align:right;top:476.51px;font-size:8.3px;color:#333;font-weight:normal;transform:scaleX(0.925);transform-origin:100% 50%">2,874</div>
<div class="t" style="left:376.78px;top:476.51px;font-size:8.3px;color:#333;font-weight:normal;">$</div>
<div class="t" style="left:353.66px;width:60px;text-align:right;top:476.51px;font-size:8.3px;color:#333;font-weight:normal;transform:scaleX(0.925);transform-origin:100% 50%">2,642</div>
<div class="t" style="left:421.36px;top:476.51px;font-size:8.3px;color:#333;font-weight:normal;">$</div>
<div class="t" style="left:398.24px;width:60px;text-align:right;top:476.51px;font-size:8.3px;color:#333;font-weight:normal;transform:scaleX(0.925);transform-origin:100% 50%">4,382</div>
<div class="t" style="left:465.94px;top:476.51px;font-size:8.3px;color:#333;font-weight:normal;">$</div>
<div class="t" style="left:442.82px;width:60px;text-align:right;top:476.51px;font-size:8.3px;color:#333;font-weight:normal;transform:scaleX(0.925);transform-origin:100% 50%">4,089</div>
<div class="t" style="left:510.52px;top:476.51px;font-size:8.3px;color:#333;font-weight:normal;">$</div>
<div class="t" style="left:487.40px;width:60px;text-align:right;top:476.51px;font-size:8.3px;color:#333;font-weight:normal;transform:scaleX(0.925);transform-origin:100% 50%">3,401</div>
<div class="t" style="left:555.10px;top:476.51px;font-size:8.3px;color:#333;font-weight:normal;">$</div>
<div class="t" style="left:531.98px;width:60px;text-align:right;top:476.51px;font-size:8.3px;color:#333;font-weight:normal;transform:scaleX(0.925);transform-origin:100% 50%">1,398</div>
<div class="t" style="left:599.68px;top:476.51px;font-size:8.3px;color:#333;font-weight:normal;">$</div>
<div class="t" style="left:576.56px;width:60px;text-align:right;top:476.51px;font-size:8.3px;color:#333;font-weight:normal;transform:scaleX(0.925);transform-origin:100% 50%">2,835</div>
<div class="t" style="left:644.26px;top:476.51px;font-size:8.3px;color:#333;font-weight:normal;">$</div>
<div class="t" style="left:621.14px;width:60px;text-align:right;top:476.51px;font-size:8.3px;color:#333;font-weight:normal;transform:scaleX(0.925);transform-origin:100% 50%">3,021</div>
<div class="t" style="left:688.84px;top:476.51px;font-size:8.3px;color:#333;font-weight:normal;">$</div>
<div class="t" style="left:665.72px;width:60px;text-align:right;top:476.51px;font-size:8.3px;color:#333;font-weight:normal;transform:scaleX(0.925);transform-origin:100% 50%">4,353</div>
<div class="t" style="left:733.42px;top:476.51px;font-size:8.3px;color:#333;font-weight:normal;">$</div>
<div class="t" style="left:710.30px;width:60px;text-align:right;top:476.51px;font-size:8.3px;color:#333;font-weight:normal;transform:scaleX(0.925);transform-origin:100% 50%">2,345</div>
<div class="t" style="left:778.00px;top:476.51px;font-size:8.3px;color:#333;font-weight:normal;">$</div>
<div class="t" style="left:754.88px;width:60px;text-align:right;top:476.51px;font-size:8.3px;color:#333;font-weight:normal;transform:scaleX(0.925);transform-origin:100% 50%">4,386</div>
<div class="t" style="left:822.58px;top:476.51px;font-size:8.3px;color:#333;font-weight:normal;">$</div>
<div class="t" style="left:799.46px;width:60px;text-align:right;top:476.51px;font-size:8.3px;color:#333;font-weight:normal;transform:scaleX(0.925);transform-origin:100% 50%">3,045</div>
<div class="a" style="left:863.70px;top:474.35px;width:56.20px;height:11.95px;background:#f97f6f"></div>
<div class="t" style="left:866.50px;top:476.51px;font-size:8.3px;color:#333;font-weight:normal;">$</div>
<div class="t" style="left:855.40px;width:60px;text-align:right;top:476.51px;font-size:8.3px;color:#333;font-weight:normal;transform:scaleX(0.925);transform-origin:100% 50%">38,769</div>
<div class="t" style="left:332.20px;top:488.46px;font-size:8.3px;color:#333;font-weight:normal;">$</div>
<div class="t" style="left:309.08px;width:60px;text-align:right;top:488.46px;font-size:8.3px;color:#333;font-weight:normal;transform:scaleX(0.925);transform-origin:100% 50%">628</div>
<div class="t" style="left:376.78px;top:488.46px;font-size:8.3px;color:#333;font-weight:normal;">$</div>
<div class="t" style="left:353.66px;width:60px;text-align:right;top:488.46px;font-size:8.3px;color:#333;font-weight:normal;transform:scaleX(0.925);transform-origin:100% 50%">1,160</div>
<div class="t" style="left:421.36px;top:488.46px;font-size:8.3px;color:#333;font-weight:normal;">$</div>
<div class="t" style="left:398.24px;width:60px;text-align:right;top:488.46px;font-size:8.3px;color:#333;font-weight:normal;transform:scaleX(0.925);transform-origin:100% 50%">1,015</div>
<div class="t" style="left:465.94px;top:488.46px;font-size:8.3px;color:#333;font-weight:normal;">$</div>
<div class="t" style="left:442.82px;width:60px;text-align:right;top:488.46px;font-size:8.3px;color:#333;font-weight:normal;transform:scaleX(0.925);transform-origin:100% 50%">1,283</div>
<div class="t" style="left:510.52px;top:488.46px;font-size:8.3px;color:#333;font-weight:normal;">$</div>
<div class="t" style="left:487.40px;width:60px;text-align:right;top:488.46px;font-size:8.3px;color:#333;font-weight:normal;transform:scaleX(0.925);transform-origin:100% 50%">383</div>
<div class="t" style="left:555.10px;top:488.46px;font-size:8.3px;color:#333;font-weight:normal;">$</div>
<div class="t" style="left:531.98px;width:60px;text-align:right;top:488.46px;font-size:8.3px;color:#333;font-weight:normal;transform:scaleX(0.925);transform-origin:100% 50%">1,060</div>
<div class="t" style="left:599.68px;top:488.46px;font-size:8.3px;color:#333;font-weight:normal;">$</div>
<div class="t" style="left:576.56px;width:60px;text-align:right;top:488.46px;font-size:8.3px;color:#333;font-weight:normal;transform:scaleX(0.925);transform-origin:100% 50%">1,028</div>
<div class="t" style="left:644.26px;top:488.46px;font-size:8.3px;color:#333;font-weight:normal;">$</div>
<div class="t" style="left:621.14px;width:60px;text-align:right;top:488.46px;font-size:8.3px;color:#333;font-weight:normal;transform:scaleX(0.925);transform-origin:100% 50%">685</div>
<div class="t" style="left:688.84px;top:488.46px;font-size:8.3px;color:#333;font-weight:normal;">$</div>
<div class="t" style="left:665.72px;width:60px;text-align:right;top:488.46px;font-size:8.3px;color:#333;font-weight:normal;transform:scaleX(0.925);transform-origin:100% 50%">1,423</div>
<div class="t" style="left:733.42px;top:488.46px;font-size:8.3px;color:#333;font-weight:normal;">$</div>
<div class="t" style="left:710.30px;width:60px;text-align:right;top:488.46px;font-size:8.3px;color:#333;font-weight:normal;transform:scaleX(0.925);transform-origin:100% 50%">1,078</div>
<div class="t" style="left:778.00px;top:488.46px;font-size:8.3px;color:#333;font-weight:normal;">$</div>
<div class="t" style="left:754.88px;width:60px;text-align:right;top:488.46px;font-size:8.3px;color:#333;font-weight:normal;transform:scaleX(0.925);transform-origin:100% 50%">958</div>
<div class="t" style="left:822.58px;top:488.46px;font-size:8.3px;color:#333;font-weight:normal;">$</div>
<div class="t" style="left:799.46px;width:60px;text-align:right;top:488.46px;font-size:8.3px;color:#333;font-weight:normal;transform:scaleX(0.925);transform-origin:100% 50%">913</div>
<div class="a" style="left:863.70px;top:486.30px;width:56.20px;height:11.95px;background:#f86a6b"></div>
<div class="t" style="left:866.50px;top:488.46px;font-size:8.3px;color:#333;font-weight:normal;">$</div>
<div class="t" style="left:855.40px;width:60px;text-align:right;top:488.46px;font-size:8.3px;color:#333;font-weight:normal;transform:scaleX(0.925);transform-origin:100% 50%">11,610</div>
<div class="t" style="left:332.20px;top:500.41px;font-size:8.3px;color:#333;font-weight:normal;">$</div>
<div class="t" style="left:309.08px;width:60px;text-align:right;top:500.41px;font-size:8.3px;color:#333;font-weight:normal;transform:scaleX(0.925);transform-origin:100% 50%">9,450</div>
<div class="t" style="left:376.78px;top:500.41px;font-size:8.3px;color:#333;font-weight:normal;">$</div>
<div class="t" style="left:353.66px;width:60px;text-align:right;top:500.41px;font-size:8.3px;color:#333;font-weight:normal;transform:scaleX(0.925);transform-origin:100% 50%">8,416</div>
<div class="t" style="left:421.36px;top:500.41px;font-size:8.3px;color:#333;font-weight:normal;">$</div>
<div class="t" style="left:398.24px;width:60px;text-align:right;top:500.41px;font-size:8.3px;color:#333;font-weight:normal;transform:scaleX(0.925);transform-origin:100% 50%">10,882</div>
<div class="t" style="left:465.94px;top:500.41px;font-size:8.3px;color:#333;font-weight:normal;">$</div>
<div class="t" style="left:442.82px;width:60px;text-align:right;top:500.41px;font-size:8.3px;color:#333;font-weight:normal;transform:scaleX(0.925);transform-origin:100% 50%">7,384</div>
<div class="t" style="left:510.52px;top:500.41px;font-size:8.3px;color:#333;font-weight:normal;">$</div>
<div class="t" style="left:487.40px;width:60px;text-align:right;top:500.41px;font-size:8.3px;color:#333;font-weight:normal;transform:scaleX(0.925);transform-origin:100% 50%">7,561</div>
<div class="t" style="left:555.10px;top:500.41px;font-size:8.3px;color:#333;font-weight:normal;">$</div>
<div class="t" style="left:531.98px;width:60px;text-align:right;top:500.41px;font-size:8.3px;color:#333;font-weight:normal;transform:scaleX(0.925);transform-origin:100% 50%">11,256</div>
<div class="t" style="left:599.68px;top:500.41px;font-size:8.3px;color:#333;font-weight:normal;">$</div>
<div class="t" style="left:576.56px;width:60px;text-align:right;top:500.41px;font-size:8.3px;color:#333;font-weight:normal;transform:scaleX(0.925);transform-origin:100% 50%">6,269</div>
<div class="t" style="left:644.26px;top:500.41px;font-size:8.3px;color:#333;font-weight:normal;">$</div>
<div class="t" style="left:621.14px;width:60px;text-align:right;top:500.41px;font-size:8.3px;color:#333;font-weight:normal;transform:scaleX(0.925);transform-origin:100% 50%">8,116</div>
<div class="t" style="left:688.84px;top:500.41px;font-size:8.3px;color:#333;font-weight:normal;">$</div>
<div class="t" style="left:665.72px;width:60px;text-align:right;top:500.41px;font-size:8.3px;color:#333;font-weight:normal;transform:scaleX(0.925);transform-origin:100% 50%">10,822</div>
<div class="t" style="left:733.42px;top:500.41px;font-size:8.3px;color:#333;font-weight:normal;">$</div>
<div class="t" style="left:710.30px;width:60px;text-align:right;top:500.41px;font-size:8.3px;color:#333;font-weight:normal;transform:scaleX(0.925);transform-origin:100% 50%">5,516</div>
<div class="t" style="left:778.00px;top:500.41px;font-size:8.3px;color:#333;font-weight:normal;">$</div>
<div class="t" style="left:754.88px;width:60px;text-align:right;top:500.41px;font-size:8.3px;color:#333;font-weight:normal;transform:scaleX(0.925);transform-origin:100% 50%">5,859</div>
<div class="t" style="left:822.58px;top:500.41px;font-size:8.3px;color:#333;font-weight:normal;">$</div>
<div class="t" style="left:799.46px;width:60px;text-align:right;top:500.41px;font-size:8.3px;color:#333;font-weight:normal;transform:scaleX(0.925);transform-origin:100% 50%">8,833</div>
<div class="a" style="left:863.70px;top:498.25px;width:56.20px;height:11.95px;background:#fba376"></div>
<div class="t" style="left:866.50px;top:500.41px;font-size:8.3px;color:#333;font-weight:normal;">$</div>
<div class="t" style="left:855.40px;width:60px;text-align:right;top:500.41px;font-size:8.3px;color:#333;font-weight:normal;transform:scaleX(0.925);transform-origin:100% 50%">84,855</div>
<div class="a" style="left:863.10px;top:342.00px;width:1.10px;height:160.90px;background:#4a5566"></div>
<div class="a" style="left:919.90px;top:342.00px;width:3.10px;height:160.90px;background:#fff"></div>
<div class="a" style="left:863.70px;top:425.80px;width:58.70px;height:1.10px;background:#5e5a55"></div>
</div></div>
<svg style="left:0;top:0;z-index:50" width="950" height="534" viewBox="0 0 950 534"><path fill="#fff" fill-rule="evenodd" d="M-5 -5 H955 V539 H-5 Z M14 1 H936 A13 13 0 0 1 949 14 V520 A13 13 0 0 1 936 533 H14 A13 13 0 0 1 1 520 V14 A13 13 0 0 1 14 1 Z"/><rect x="1.15" y="0.95" width="947.7" height="532" rx="12.5" fill="none" stroke="#aaacaf" stroke-width="2.1"/></svg>
</body></html>
